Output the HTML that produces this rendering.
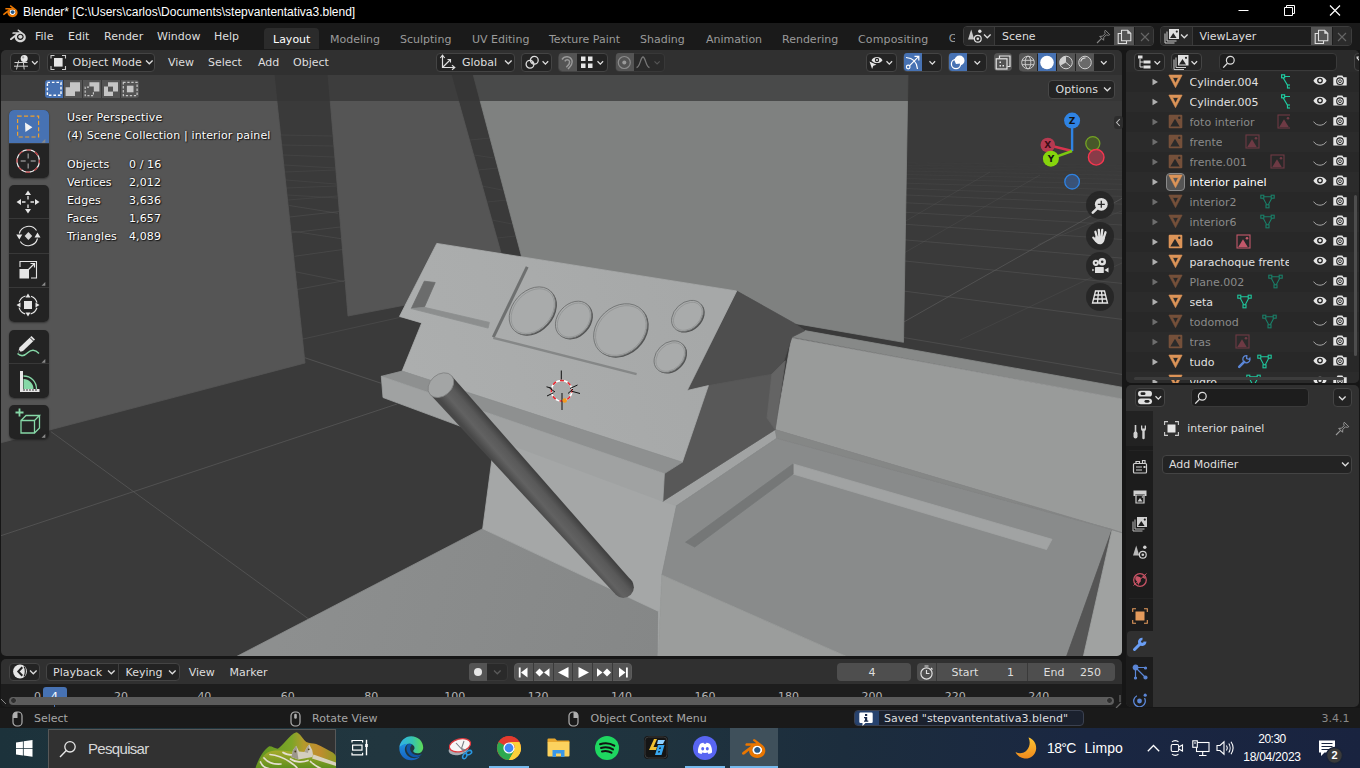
<!DOCTYPE html>
<html><head><meta charset="utf-8"><title>Blender</title>
<style>
*{box-sizing:border-box;margin:0;padding:0}
html,body{width:1360px;height:768px;overflow:hidden;background:#161616}
body{position:relative;font-family:"DejaVu Sans","Liberation Sans",sans-serif;font-size:11px;color:#dedede;line-height:1}
.a{position:absolute}
.t{position:absolute;white-space:pre;line-height:13px;height:13px}
.seg{font-family:"Liberation Sans",sans-serif}
svg{position:absolute;overflow:visible}
#title{left:0;top:0;width:1360px;height:23px;background:#000}
#topbar{left:0;top:23px;width:1360px;height:26.5px;background:#1a1a1a}
#vhead{left:0;top:49px;width:1123px;height:25px;background:#2b2b2b;border-radius:0 5px 0 0}
.btn{position:absolute;background:#232323;border:1px solid #444;border-radius:4px}
.tab{color:#9b9b9b}
</style></head><body>
<!--TITLE-->
<div id="title" class="a">
<span class="t seg" style="left:23px;top:5px;font-size:12px;line-height:15px;height:15px;color:#fff">Blender* [C:\Users\carlos\Documents\stepvantentativa3.blend]</span>
</div>
<!--TOPBAR-->
<div id="topbar" class="a">
<span class="t" style="left:35px;top:7px">File</span>
<span class="t" style="left:68px;top:7px">Edit</span>
<span class="t" style="left:104px;top:7px">Render</span>
<span class="t" style="left:157px;top:7px">Window</span>
<span class="t" style="left:214px;top:7px">Help</span>
<div class="a" style="left:264px;top:5px;width:55px;height:21px;background:#2b2b2b;border-radius:4px 4px 0 0"></div>
<span class="t" style="left:273px;top:10px;color:#fff">Layout</span>
<span class="t tab" style="left:330px;top:10px">Modeling</span>
<span class="t tab" style="left:400px;top:10px">Sculpting</span>
<span class="t tab" style="left:472px;top:10px">UV Editing</span>
<span class="t tab" style="left:549px;top:10px">Texture Paint</span>
<span class="t tab" style="left:640px;top:10px">Shading</span>
<span class="t tab" style="left:706px;top:10px">Animation</span>
<span class="t tab" style="left:782px;top:10px">Rendering</span>
<span class="t tab" style="left:858px;top:10px;letter-spacing:.14px">Compositing</span>
</div>
<!--VHEADBG-->
<!--VIEWPORT-->
<svg class="a" style="left:0;top:0" width="1360" height="768" viewBox="0 0 1360 768">
<defs>
<clipPath id="vpc"><path d="M1 74H1122V651a5 5 0 0 1 -5 5H6a5 5 0 0 1 -5 -5Z"/></clipPath>
<linearGradient id="cyl" gradientUnits="userSpaceOnUse" x1="541" y1="478.7" x2="523" y2="494.5"><stop offset="0" stop-color="#414141"/><stop offset=".3" stop-color="#595959"/><stop offset=".65" stop-color="#626262"/><stop offset="1" stop-color="#484848"/></linearGradient>
<linearGradient id="dash" gradientUnits="userSpaceOnUse" x1="700" y1="300" x2="420" y2="400"><stop offset="0" stop-color="#a6a8a8"/><stop offset="1" stop-color="#acaeae"/></linearGradient>
<linearGradient id="floor" gradientUnits="userSpaceOnUse" x1="300" y1="560" x2="660" y2="660"><stop offset="0" stop-color="#8d8f8f"/><stop offset="1" stop-color="#858787"/></linearGradient>
</defs>
<g clip-path="url(#vpc)">
<rect x="0" y="74" width="1123" height="584" fill="#3a3a3a"/>
<!--grid-->
<g stroke="#5a5a5a" stroke-width="1" fill="none" id="grid">
<g stroke-opacity=".75"><path d="M50.8 431.5L310 620M0 536L397 404M305 357.8L381 383.2"/>
<path d="M904 321.900L1124 197.200"/></g>
<path d="M904 337.6L1124 374.8" stroke-opacity="0.55"/>
<path d="M904 291.1L1124 319.6" stroke-opacity="0.52"/>
<path d="M904 260.9L1124 283.6" stroke-opacity="0.48"/>
<path d="M904 239.8L1124 258.3" stroke-opacity="0.45"/>
<path d="M904 224.2L1124 239.6" stroke-opacity="0.41"/>
<path d="M904 212.2L1124 225.1" stroke-opacity="0.38"/>
<path d="M904 202.7L1124 213.6" stroke-opacity="0.34"/>
<path d="M904 194.9L1124 204.2" stroke-opacity="0.31"/>
<path d="M904 188.5L1124 196.5" stroke-opacity="0.27"/>
<path d="M904 183.1L1124 189.9" stroke-opacity="0.23"/>
<path d="M904 178.5L1124 184.3" stroke-opacity="0.20"/>
<path d="M904 174.5L1124 179.5" stroke-opacity="0.17"/>
<path d="M904 171.0L1124 175.3" stroke-opacity="0.13"/>
<path d="M904 168.0L1124 171.5" stroke-opacity="0.09"/>
<path d="M904 165.3L1124 168.2" stroke-opacity="0.08"/>
<path d="M904 162.8L1124 165.3" stroke-opacity="0.08"/>
<g stroke-opacity=".3"><path d="M904 253L1040 175M904 222L990 172M1038 244.500L1124 210M960 340L1124 262"/></g>
<g stroke-opacity=".4">
<path d="M291.3 232.8L340 227M291.5 231L341 238.7M294.4 256.3L342 249.6M296 271.9L344 281.6M297 289.5L345 280.5M289.3 205.5L338 213.3M289.500 217L339 211.500M303 339L402.600 316.800"/></g>
<g stroke-opacity=".25">
<path d="M286 180L336 184M286.500 188L336.500 186M287.500 195L337 198M288 200L337.500 196M284 165L335 168M284.500 172L335.500 170M283 155L334 157M282 145L333 146M281 135L332 136"/>
<path d="M470 140L490 138M474 155L494 158M478 170L498 168M482 186L502 190M487 202L507 200M492 220L512 224M497 238L516 236"/></g>
</g>
<!--walls-->
<polygon points="0,74 274,74 305,363 0,443" fill="#555" stroke="#555" stroke-width=".8" stroke-linejoin="round"/>
<polygon points="328,74 451,74 510,285 348,316" fill="#555" stroke="#555" stroke-width=".8" stroke-linejoin="round"/>
<polygon points="473,74 908,74 903.5,342.3 794.5,323.4 736.7,291 521.7,257" fill="#7f8180" stroke="#7f8180" stroke-width=".8" stroke-linejoin="round"/>
<!--seat back-->
<polygon points="804.9,330.6 1123,387.4 1123,399.2 791.9,337.1" fill="#878988" stroke="#878988" stroke-width=".8" stroke-linejoin="round"/>
<polygon points="791.5,338 1123,399.2 1123,533 775.2,429.6" fill="#999b9a" stroke="#999b9a" stroke-width=".8" stroke-linejoin="round"/>
<!--floor/body-->
<polygon points="482.7,528.7 658.5,611.4 658.5,658 233.7,658" fill="url(#floor)" stroke="url(#floor)" stroke-width=".8" stroke-linejoin="round"/>
<polygon points="495,436 662.8,500 676.5,505.8 661.9,575 658.2,658 658.5,611.4 482.7,528.7" fill="#a5a7a7" stroke="#a5a7a7" stroke-width=".8" stroke-linejoin="round"/>
<!--seat-->
<polygon points="662.8,501.3 775.2,429.6 776.7,438.3 676.5,505.8" fill="#a1a3a3" stroke="#a1a3a3" stroke-width=".8" stroke-linejoin="round"/>
<polygon points="776.7,438.3 1112.1,529.5 1066,658 850,658 661.9,575 676.5,505.8" fill="#898b8b" stroke="#898b8b" stroke-width=".8" stroke-linejoin="round"/>
<polygon points="661.9,575 850,658 658.2,658" fill="#9b9d9c" stroke="#9b9d9c" stroke-width=".8" stroke-linejoin="round"/>
<polygon points="1112.1,529.5 1083,658 1066,658" fill="#555" stroke="#555" stroke-width=".8" stroke-linejoin="round"/>
<polygon points="1112.1,529.5 1123,533 1123,658 1083,658" fill="#a0a2a1" stroke="#a0a2a1" stroke-width=".8" stroke-linejoin="round"/>
<polygon points="775.2,429.6 1123,533 1112.1,529.5 776.7,438.3" fill="#858786" stroke="#858786" stroke-width=".8" stroke-linejoin="round"/>
<polygon points="793.1,463.9 1052,539.3 1046.5,549.5 793.1,474" fill="#a1a3a3" stroke="#a1a3a3" stroke-width=".8" stroke-linejoin="round"/>
<polygon points="793.1,463.9 793.1,474 694.7,547 685.6,542.2" fill="#757777" stroke="#757777" stroke-width=".8" stroke-linejoin="round"/>
<!--dashboard sides-->
<polygon points="736.7,291 794.5,323.4 804.9,330.6 791.9,337.1 783.3,362.8 771.9,374.2 687.2,390.5" fill="#4e4e4e" stroke="#4e4e4e" stroke-width=".8" stroke-linejoin="round"/>
<polygon points="708.4,385.6 771.9,374.2 767,418 775.2,429.6 662.8,501.3 664.4,473.6 682.3,462.2" fill="#585858" stroke="#585858" stroke-width=".8" stroke-linejoin="round"/>
<polygon points="771.9,374.2 785.3,360.8 775.2,429.6 767,418" fill="#646464" stroke="#646464" stroke-width=".8" stroke-linejoin="round"/>
<!--dashboard top-->
<polygon points="436.8,243.4 736.7,291 687.2,390.5 708.4,385.6 682.3,462.2 402.1,371.1 421.7,322.9 399.5,316.4" fill="url(#dash)" stroke="url(#dash)" stroke-width=".8" stroke-linejoin="round"/>
<!--ledge-->
<polygon points="402.1,371.1 682.3,462.2 664.4,473.6 381.3,376.3" fill="#8e9090" stroke="#8e9090" stroke-width=".8" stroke-linejoin="round"/>
<polygon points="381.3,376.3 664.4,473.6 662.8,501.3 383,397.5" fill="#a0a2a2" stroke="#a0a2a2" stroke-width=".8" stroke-linejoin="round"/>
<!--dash details-->
<polygon points="424.3,281.2 435.2,282.5 424.3,307.3 411.3,308.6" fill="#6b6c6c" stroke="#6b6c6c" stroke-width=".8" stroke-linejoin="round"/>
<polygon points="411.3,308.6 424.3,307.3 489.4,322.4 488.1,328.1" fill="#8c8e8e" stroke="#8c8e8e" stroke-width=".8" stroke-linejoin="round"/>
<path d="M527.2 266.9L493.3 337.2" stroke="#6e7070" stroke-width="3" fill="none"/>
<path d="M493.3 337.8L636.6 374.2" stroke="#858787" stroke-width="2.4" fill="none"/>
<g id="gauges" fill="#a9abab" stroke="#6c6e6e" stroke-width=".8">
<ellipse cx="533.7" cy="311.8" rx="19.8" ry="26.8" transform="rotate(42 533.7 311.8)" fill="#525353" stroke="none"/>
<ellipse cx="532.4" cy="310.8" rx="19.8" ry="26.8" transform="rotate(42 532.4 310.8)"/>
<ellipse cx="532.7" cy="311.1" rx="18.2" ry="25.2" transform="rotate(42 532.7 311.1)" fill="none" stroke="#8b8d8d" stroke-width=".6"/>
<ellipse cx="574.8" cy="320.8" rx="15.8" ry="20.6" transform="rotate(42 574.8 320.8)" fill="#525353" stroke="none"/>
<ellipse cx="573.5" cy="319.8" rx="15.8" ry="20.6" transform="rotate(42 573.5 319.8)"/>
<ellipse cx="573.8" cy="320.1" rx="14.200000000000001" ry="19.0" transform="rotate(42 573.8 320.1)" fill="none" stroke="#8b8d8d" stroke-width=".6"/>
<ellipse cx="621.8" cy="331.2" rx="23.5" ry="29.5" transform="rotate(47 621.8 331.2)" fill="#525353" stroke="none"/>
<ellipse cx="620.5" cy="330.2" rx="23.5" ry="29.5" transform="rotate(47 620.5 330.2)"/>
<ellipse cx="620.8" cy="330.5" rx="21.9" ry="27.9" transform="rotate(47 620.8 330.5)" fill="none" stroke="#8b8d8d" stroke-width=".6"/>
<ellipse cx="688.8" cy="317.0" rx="13.4" ry="17.8" transform="rotate(47 688.8 317.0)" fill="#525353" stroke="none"/>
<ellipse cx="687.5" cy="316" rx="13.4" ry="17.8" transform="rotate(47 687.5 316)"/>
<ellipse cx="687.8" cy="316.3" rx="11.8" ry="16.2" transform="rotate(47 687.8 316.3)" fill="none" stroke="#8b8d8d" stroke-width=".6"/>
<ellipse cx="671.2" cy="357.7" rx="13.6" ry="17.8" transform="rotate(45 671.2 357.7)" fill="#525353" stroke="none"/>
<ellipse cx="669.9" cy="356.7" rx="13.6" ry="17.8" transform="rotate(45 669.9 356.7)"/>
<ellipse cx="670.2" cy="357.0" rx="12.0" ry="16.2" transform="rotate(45 670.2 357.0)" fill="none" stroke="#8b8d8d" stroke-width=".6"/>
</g>
<!--cylinder-->
<polygon points="451.6,375.8 632.7,582 614.3,593 430.2,394.6" fill="url(#cyl)"/>
<circle cx="623.3" cy="587.3" r="10.6" fill="url(#cyl)"/>
<ellipse cx="440.9" cy="385.2" rx="14.3" ry="10.7" fill="#a3a5a5" stroke="#7f8181" stroke-width=".8" transform="rotate(-41 440.9 385.2)"/>
<!--cursor-->
<g id="cursor">
<circle cx="561.6" cy="390.7" r="10.3" fill="none" stroke="#fff" stroke-width="1.5"/>
<circle cx="561.6" cy="390.7" r="10.3" fill="none" stroke="#e8252d" stroke-width="1.5" stroke-dasharray="4.04 4.05" stroke-dashoffset="2"/>
<path d="M561.3 370.500V379.500M562 393V410M546.500 386.800L552 388.300M571.500 391.200L580 393.500M547 396L553.500 392.800M570 388.500L577.500 385M549.500 388L555 392M573 389L568 393.500" stroke="#111" stroke-width="1"/>
<circle cx="564.7" cy="400.5" r="2.3" fill="#f39b1d"/>
</g>
</g>
</svg>
<!--/VIEWPORT-->
<!--VHEAD-->
<div id="vhead" class="a" style="left:1px;width:1121px;top:49.5px;height:25px;background:#303030;border-radius:5px 5px 0 0"></div>
<div class="a" id="vh" style="left:0;top:0;width:1123px;height:110px">
<!-- editor type -->
<div class="btn" style="left:10px;top:52.5px;width:30px;height:19px"></div>
<svg style="left:13px;top:54px" width="26" height="17" viewBox="0 0 26 17"><g stroke="#cfcfcf" stroke-width="1" fill="none"><path d="M1.500 8.500H14.500M1 12.200H15M5.700 6.500L3.500 15.500M10.200 6.500L11.200 15.500"/></g><circle cx="11.200" cy="4.500" r="3.500" fill="#e8e8e8"/><circle cx="10.200" cy="3.400" r="1.100" fill="#a0a0a0"/><path d="M19 7.300l2.800 2.800 2.800-2.800" stroke="#ddd" stroke-width="1.300" fill="none"/></svg>
<!-- object mode -->
<div class="btn" style="left:47px;top:52.5px;width:108px;height:19px"></div>
<svg style="left:50px;top:54px" width="17" height="17" viewBox="0 0 17 17"><rect x="4" y="4" width="8.6" height="8.6" fill="#e6e6e6"/><path d="M1 4.5V1.5H4.5M12 1.5H15.5V4.5M15.5 12V15.5H12M4.5 15.5H1V12" stroke="#ccc" stroke-width="1.1" fill="none"/></svg>
<span class="t" style="left:72.5px;top:56px">Object Mode</span>
<svg style="left:145px;top:59px" width="9" height="7" viewBox="0 0 9 7"><path d="M1 1.5l3.3 3.3 3.3-3.3" stroke="#ddd" stroke-width="1.3" fill="none"/></svg>
<span class="t" style="left:168px;top:56px">View</span>
<span class="t" style="left:208px;top:56px">Select</span>
<span class="t" style="left:258px;top:56px">Add</span>
<span class="t" style="left:293px;top:56px">Object</span>
<!-- global -->
<div class="btn" style="left:436px;top:52.5px;width:78.5px;height:19px"></div>
<svg style="left:439px;top:54px" width="17" height="17" viewBox="0 0 17 17"><path d="M3.5 1.5V13.5H15.5M3.5 13.5L11 6" stroke="#ddd" stroke-width="1.2" fill="none"/><path d="M1.3 4l2.2-2.8L5.7 4M13 11.3l2.8 2.2-2.8 2.2M8.5 5.5h3v3" stroke="#ddd" stroke-width="1.1" fill="none"/></svg>
<span class="t" style="left:462px;top:56px">Global</span>
<svg style="left:504px;top:59px" width="9" height="7" viewBox="0 0 9 7"><path d="M1 1.5l3.3 3.3 3.3-3.3" stroke="#ddd" stroke-width="1.3" fill="none"/></svg>
<!-- pivot -->
<div class="btn" style="left:521px;top:52.5px;width:31px;height:19px"></div>
<svg style="left:523px;top:54px" width="28" height="17" viewBox="0 0 28 17"><g stroke="#ddd" stroke-width="1.300" fill="none"><circle cx="7" cy="10.300" r="3.900"/><circle cx="11.300" cy="6.300" r="3.900"/><circle cx="9.200" cy="8.300" r="1" fill="#ddd" stroke="none"/><path d="M19.600 7.300l2.800 2.800 2.800-2.800"/></g></svg>
<!-- snap -->
<div class="btn" style="left:558px;top:52.5px;width:50px;height:19px"></div>
<div class="a" style="left:558.5px;top:53px;width:18px;height:18px;background:#545454;border-radius:3px 0 0 3px"></div>
<svg style="left:559px;top:54px" width="17" height="17" viewBox="0 0 17 17"><path d="M3 5.5C5.5 1.5 11.5 1.8 13 6.5C14 10 11 13 9 15M5.8 7.3C7 5 10 5.2 10.6 7.6C11 10 9 11.5 7.3 13.2" stroke="#9a9a9a" stroke-width="1.5" fill="none"/></svg>
<svg style="left:578px;top:54px" width="30" height="17" viewBox="0 0 30 17"><g fill="#e6e6e6"><rect x="3" y="2.5" width="4.5" height="4.5"/><rect x="10" y="2.5" width="4.5" height="4.5"/><rect x="3" y="9.5" width="4.5" height="4.5"/><rect x="10" y="9.5" width="4.5" height="4.5"/></g><path d="M19.5 7.3l2.8 2.8 2.8-2.8" stroke="#ddd" stroke-width="1.3" fill="none"/></svg>
<!-- proportional -->
<div class="btn" style="left:615px;top:52.5px;width:50px;height:19px;background:#2a2a2a;border-color:#383838"></div>
<div class="a" style="left:615.5px;top:53px;width:18px;height:18px;background:#545454;border-radius:3px 0 0 3px"></div>
<svg style="left:616px;top:54px" width="17" height="17" viewBox="0 0 17 17"><circle cx="8.3" cy="8.5" r="6" stroke="#8c8c8c" stroke-width="1.2" fill="none"/><circle cx="8.3" cy="8.5" r="2" fill="#9a9a9a"/></svg>
<svg style="left:634px;top:54px" width="30" height="17" viewBox="0 0 30 17"><path d="M2.5 13.5C6 13.5 6.5 3 9 3S12 13.5 15.5 13.5" stroke="#777" stroke-width="1.3" fill="none"/><path d="M20.5 7.3l2.6 2.6 2.6-2.6" stroke="#555" stroke-width="1.2" fill="none"/></svg>
<!-- visibility -->
<div class="btn" style="left:866px;top:52.5px;width:30.5px;height:19px"></div>
<svg style="left:867px;top:54px" width="29" height="17" viewBox="0 0 29 17"><path d="M4.5 6.2C7 2 13 2 15.5 6.2C13 10 7 10 4.5 6.2Z" fill="#e6e6e6"/><circle cx="10" cy="6" r="2.2" fill="#232323"/><circle cx="10" cy="6" r="1" fill="#e6e6e6"/><path d="M2.5 7.5l7 3.2-3.2 1-1.2 3.3z" fill="#e6e6e6"/><path d="M19.5 7.3l2.8 2.8 2.8-2.8" stroke="#ddd" stroke-width="1.3" fill="none"/></svg>
<!-- gizmo -->
<div class="btn" style="left:903px;top:52.5px;width:38.5px;height:19px"></div>
<div class="a" style="left:903.5px;top:53px;width:18px;height:18px;background:#4772b3;border-radius:3px 0 0 3px"></div>
<svg style="left:904px;top:54px" width="37" height="17" viewBox="0 0 37 17"><g stroke="#fff" stroke-width="1.2" fill="none"><circle cx="4.2" cy="13" r="1.8"/><path d="M5.6 11.6L14.5 2.6M10.5 2.3h4.3v4.3M2 3.5C9 4 13 8 13.5 15"/><path d="M25.5 7.3l2.8 2.8 2.8-2.8" stroke="#ddd" stroke-width="1.3"/></g></svg>
<!-- overlay -->
<div class="btn" style="left:948px;top:52.5px;width:38.5px;height:19px"></div>
<div class="a" style="left:948.5px;top:53px;width:18px;height:18px;background:#4772b3;border-radius:3px 0 0 3px"></div>
<svg style="left:949px;top:54px" width="37" height="17" viewBox="0 0 37 17"><circle cx="10.5" cy="6.5" r="5" fill="#fff"/><circle cx="7" cy="10" r="4.6" fill="#4772b3" stroke="#fff" stroke-width="1.2"/><path d="M5 5.6A5 5 0 0 1 11.8 9.5L7 10Z" fill="#fff"/><path d="M25.5 7.3l2.8 2.8 2.8-2.8" stroke="#ddd" stroke-width="1.3" fill="none"/></svg>
<!-- xray -->
<div class="a" style="left:994.3px;top:53px;width:17.7px;height:18px;background:#545454;border-radius:4px"></div>
<svg style="left:994.3px;top:53.7px" width="18" height="17" viewBox="0 0 18 17"><g stroke="#e6e6e6" stroke-width="1.2" fill="none"><path d="M5.5 4.5V2H16V12.5H13.5"/><rect x="2.2" y="4.8" width="10.8" height="10.2"/></g><rect x="5.5" y="7.5" width="1.5" height="1.5" fill="#e6e6e6"/><rect x="5.5" y="11" width="1.5" height="1.5" fill="#e6e6e6"/><rect x="8.5" y="11" width="1.5" height="1.5" fill="#e6e6e6"/></svg>
<!-- shading -->
<div class="btn" style="left:1018.5px;top:52.5px;width:96px;height:19px"></div>
<div class="a" style="left:1019px;top:53px;width:18px;height:18px;background:#545454;border-radius:3px 0 0 3px"></div>
<div class="a" style="left:1037.7px;top:53px;width:18.3px;height:18px;background:#4772b3"></div>
<div class="a" style="left:1056.7px;top:53px;width:18.3px;height:18px;background:#545454"></div>
<div class="a" style="left:1075.7px;top:53px;width:18.3px;height:18px;background:#545454"></div>
<svg style="left:1019px;top:54px" width="95" height="17" viewBox="0 0 95 17"><g stroke="#c8c8c8" stroke-width="1" fill="none"><circle cx="9" cy="8.5" r="6.3"/><ellipse cx="9" cy="8.5" rx="2.8" ry="6.3"/><path d="M3 6.3H15M3 10.7H15"/></g><circle cx="28" cy="8.5" r="6.8" fill="#fff"/><circle cx="47" cy="8.5" r="6.300" fill="#5e5e5e" stroke="#d0d0d0" stroke-width="1"/><path d="M47 8.500V2.200A6.300 6.300 0 0 0 41.500 11.600Z" fill="#cfcfcf"/><path d="M47 8.500L51.800 12.600" stroke="#d0d0d0" stroke-width="1"/><circle cx="66" cy="8.5" r="6.3" fill="#6a6a6a" stroke="#d0d0d0" stroke-width="1"/><path d="M61.8 7.5A4.5 4.5 0 0 1 66.5 4" stroke="#e6e6e6" stroke-width="1.1" fill="none"/><path d="M82 7.3l2.8 2.8 2.8-2.8" stroke="#ddd" stroke-width="1.3" fill="none"/></svg>
<!-- tool settings bar -->
<div class="a" style="left:1px;top:74.5px;width:1121px;height:26.5px;background:rgba(53,53,53,.72)"></div>
<div class="a" style="left:45px;top:80px;width:94px;height:17.5px;background:#3a3a3a;border-radius:3px"></div>
<div class="a" style="left:45px;top:80px;width:18px;height:17.5px;background:#4772b3;border-radius:3px 0 0 3px"></div>
<div class="a" style="left:63.8px;top:80px;width:18.2px;height:17.5px;background:#545454"></div>
<div class="a" style="left:82.7px;top:80px;width:18.2px;height:17.5px;background:#545454"></div>
<div class="a" style="left:101.6px;top:80px;width:18.2px;height:17.5px;background:#545454"></div>
<div class="a" style="left:120.5px;top:80px;width:18.3px;height:17.5px;background:#545454;border-radius:0 3px 3px 0"></div>
<svg style="left:45px;top:80px" width="94" height="18" viewBox="0 0 94 18"><rect x="2.400" y="2.400" width="13.600" height="12.900" fill="none" stroke="#fff" stroke-width="1.400" stroke-dasharray="2.600 1.900"/><path d="M25 2.200H35V11.600H30V16H20.600V7.200H25Z" fill="#c6c6c6"/><path d="M44.400 2.200H54.400V11.600H48.800V6.600H44.400Z" fill="#c6c6c6"/><path d="M44 7.200H40.200V15.600H48.400V12" fill="none" stroke="#c6c6c6" stroke-width="1.200" stroke-dasharray="2.100 1.500"/><path d="M63 2.200H73V11.600H68V16H59V6.600H63Z" fill="#c6c6c6"/><rect x="63" y="6.600" width="5" height="5" fill="#545454"/><rect x="78.300" y="2.400" width="13.800" height="13.200" fill="none" stroke="#c6c6c6" stroke-width="1.200" stroke-dasharray="2.300 1.700"/><rect x="81.900" y="5.700" width="6.600" height="6.600" fill="#c6c6c6"/></svg>
<!-- options -->
<div class="btn" style="left:1047.5px;top:80px;width:67.5px;height:18.5px;background:#232323;border-color:#474747"></div>
<span class="t" style="left:1055.5px;top:82.500px">Options</span>
<svg style="left:1103px;top:85.500px" width="9" height="7" viewBox="0 0 9 7"><path d="M1 1.5l3.3 3.3 3.3-3.3" stroke="#ddd" stroke-width="1.3" fill="none"/></svg>
</div>
<!--/VHEAD-->
<!--OVERLAY-->
<div class="a" id="ov" style="left:0;top:0;width:1123px;height:660px">
<div class="a" style="left:9px;top:109.5px;width:40px;height:68.8px;background:rgba(33,33,33,.95);border-radius:5px;box-shadow:0 1px 2px rgba(0,0,0,.4)"></div>
<div class="a" style="left:9px;top:109.5px;width:40px;height:34.4px;background:#4772b3;border-radius:5px 5px 0 0"></div>
<svg style="left:8.700px;top:109.5px" width="40" height="34.400" viewBox="0 0 40 34.400"><rect x="8.600" y="6.200" width="21" height="20.800" fill="none" stroke="#f0a02c" stroke-width="1.200" stroke-dasharray="4.100 2.300"/><path d="M16 12.400L23.400 17.200L16.400 21.900Z" fill="#f2f2f2"/><path d="M36.300 29V32.800H32.500Z" fill="#8a8a8a"/></svg>
<div class="a" style="left:9px;top:143.4px;width:40px;height:1px;background:#383838"></div>
<svg style="left:8.700px;top:143.9px" width="40" height="34.400" viewBox="0 0 40 34.400"><circle cx="19.200" cy="17" r="11.200" fill="none" stroke="#eee" stroke-width="1.200"/><circle cx="19.200" cy="17" r="11.200" fill="none" stroke="#b8383c" stroke-width="1.200" stroke-dasharray="4.400 4.400" stroke-dashoffset="2"/><path d="M19.200 9.500V14.500M19.200 19.500V24.500M11.700 17H16.700M21.700 17H26.700" stroke="#8a8a8a" stroke-width="1.400"/></svg>
<div class="a" style="left:9px;top:184.5px;width:40px;height:137.6px;background:rgba(33,33,33,.95);border-radius:5px;box-shadow:0 1px 2px rgba(0,0,0,.4)"></div>
<svg style="left:8.700px;top:184.5px" width="40" height="34.400" viewBox="0 0 40 34.400"><g fill="#e6e6e6"><path d="M19 5.500L22 10H16ZM19 28.500L22 24H16ZM7.500 17L12 14V20ZM30.500 17L26 14V20Z"/></g><path d="M19 11V14.500M19 19.500V23M13 17H16.500M21.500 17H25" stroke="#e6e6e6" stroke-width="1.300"/></svg>
<div class="a" style="left:9px;top:218.4px;width:40px;height:1px;background:#383838"></div>
<svg style="left:8.700px;top:218.9px" width="40" height="34.400" viewBox="0 0 40 34.400"><path d="M10.300 14.500A9.600 9.600 0 0 1 27.500 11.500M28.500 19.500A9.600 9.600 0 0 1 11.300 22.500" fill="none" stroke="#e6e6e6" stroke-width="1.100"/><path d="M19.400 13L23.200 17L19.400 21L15.600 17Z" fill="#d8d8d8"/><path d="M7.300 15.500H13.300L10.300 20.500ZM25.500 18.500H31.500L28.500 13.500Z" fill="#e6e6e6"/></svg>
<div class="a" style="left:9px;top:252.8px;width:40px;height:1px;background:#383838"></div>
<svg style="left:8.700px;top:253.3px" width="40" height="34.400" viewBox="0 0 40 34.400"><rect x="10.500" y="16" width="9.500" height="9.500" fill="#e6e6e6"/><path d="M11 14V8.500H27.500V25H22" fill="none" stroke="#e6e6e6" stroke-width="1.100"/><path d="M19.500 16.500L25 11M21.500 10.500H25.500V14.500" stroke="#e6e6e6" stroke-width="1.200" fill="none"/><path d="M36.300 29V32.800H32.500Z" fill="#8a8a8a"/></svg>
<div class="a" style="left:9px;top:287.2px;width:40px;height:1px;background:#383838"></div>
<svg style="left:8.700px;top:287.7px" width="40" height="34.400" viewBox="0 0 40 34.400"><rect x="15" y="13" width="8" height="8" fill="#e6e6e6"/><circle cx="19" cy="17" r="9.300" fill="none" stroke="#e6e6e6" stroke-width="1.200" stroke-dasharray="9 5.600" stroke-dashoffset="-2.800"/><path d="M19 5.500L21.500 9.500H16.500ZM19 28.500L21.500 24.500H16.500ZM7.500 17L11.500 14.500V19.500ZM30.500 17L26.500 14.500V19.500Z" fill="#e6e6e6"/></svg>
<div class="a" style="left:9px;top:329.5px;width:40px;height:68.8px;background:rgba(33,33,33,.95);border-radius:5px;box-shadow:0 1px 2px rgba(0,0,0,.4)"></div>
<svg style="left:8.700px;top:329.5px" width="40" height="34.400" viewBox="0 0 40 34.400"><path d="M8.500 23.500C12 27 16 25.500 19 22.500C22 19.500 26 19 30 23.500" fill="none" stroke="#86d8a7" stroke-width="1.400"/><path d="M9 22.500L10.500 17.500L22.500 6L26 9.500L14 21Z" fill="#e6e6e6"/><path d="M21 7.500L24.500 11" stroke="#222" stroke-width="1"/><path d="M9 22.500L9.800 19.800L11.700 21.700Z" fill="#222"/><path d="M36.300 29V32.800H32.500Z" fill="#8a8a8a"/></svg>
<div class="a" style="left:9px;top:363.4px;width:40px;height:1px;background:#383838"></div>
<svg style="left:8.700px;top:363.9px" width="40" height="34.400" viewBox="0 0 40 34.400"><path d="M12.500 7V26.500M11 26.500H30.500" stroke="#e6e6e6" stroke-width="3"/><path d="M14 10H16M14 13H16M14 16H16M14 19H16M14 22H16M15 27V25M18 27V25M21 27V25M24 27V25M27 27V25" stroke="#222" stroke-width=".9"/><path d="M14.500 25V15C20 15 24.500 19.500 24.500 25Z" fill="#86d8a7"/><path d="M14.500 12C22 12 27.500 17.500 27.500 25" fill="none" stroke="#86d8a7" stroke-width="1.300"/></svg>
<div class="a" style="left:9px;top:404.5px;width:40px;height:34.4px;background:rgba(33,33,33,.95);border-radius:5px;box-shadow:0 1px 2px rgba(0,0,0,.4)"></div>
<svg style="left:8.700px;top:404.5px" width="40" height="34.400" viewBox="0 0 40 34.400"><g fill="none" stroke="#86d8a7" stroke-width="1.300"><path d="M12 15.500H25.500V28H12ZM12 15.500L17 10.500H30.500L25.500 15.500M30.500 10.500V23L25.500 28"/><path d="M6.500 7.500H14.500M10.500 3.500V11.500" stroke-width="1.800"/></g><path d="M36.300 29V32.800H32.500Z" fill="#8a8a8a"/></svg>
<span class="t" style="left:67px;top:110.5px;color:#fff;text-shadow:0 0 2px rgba(0,0,0,.9),1px 1px 1px rgba(0,0,0,.7);letter-spacing:0.2px">User Perspective</span>
<span class="t" style="left:67px;top:128.5px;color:#fff;text-shadow:0 0 2px rgba(0,0,0,.9),1px 1px 1px rgba(0,0,0,.7);letter-spacing:0.14px">(4) Scene Collection | interior painel</span>
<span class="t" style="left:67px;top:157.7px;color:#fff;text-shadow:0 0 2px rgba(0,0,0,.9),1px 1px 1px rgba(0,0,0,.7);letter-spacing:0.1px">Objects</span>
<span class="t" style="left:129px;top:157.7px;color:#fff;text-shadow:0 0 2px rgba(0,0,0,.9),1px 1px 1px rgba(0,0,0,.7);letter-spacing:0.1px">0 / 16</span>
<span class="t" style="left:67px;top:175.7px;color:#fff;text-shadow:0 0 2px rgba(0,0,0,.9),1px 1px 1px rgba(0,0,0,.7);letter-spacing:0.1px">Vertices</span>
<span class="t" style="left:129px;top:175.7px;color:#fff;text-shadow:0 0 2px rgba(0,0,0,.9),1px 1px 1px rgba(0,0,0,.7);letter-spacing:0.1px">2,012</span>
<span class="t" style="left:67px;top:193.7px;color:#fff;text-shadow:0 0 2px rgba(0,0,0,.9),1px 1px 1px rgba(0,0,0,.7);letter-spacing:0.1px">Edges</span>
<span class="t" style="left:129px;top:193.7px;color:#fff;text-shadow:0 0 2px rgba(0,0,0,.9),1px 1px 1px rgba(0,0,0,.7);letter-spacing:0.1px">3,636</span>
<span class="t" style="left:67px;top:211.7px;color:#fff;text-shadow:0 0 2px rgba(0,0,0,.9),1px 1px 1px rgba(0,0,0,.7);letter-spacing:0.1px">Faces</span>
<span class="t" style="left:129px;top:211.7px;color:#fff;text-shadow:0 0 2px rgba(0,0,0,.9),1px 1px 1px rgba(0,0,0,.7);letter-spacing:0.1px">1,657</span>
<span class="t" style="left:67px;top:229.7px;color:#fff;text-shadow:0 0 2px rgba(0,0,0,.9),1px 1px 1px rgba(0,0,0,.7);letter-spacing:0.1px">Triangles</span>
<span class="t" style="left:129px;top:229.7px;color:#fff;text-shadow:0 0 2px rgba(0,0,0,.9),1px 1px 1px rgba(0,0,0,.7);letter-spacing:0.1px">4,089</span>
<svg style="left:1030px;top:105px" width="90" height="90" viewBox="1030 105 90 90"><circle cx="1092.800" cy="143.600" r="7" fill="#4a5e27" fill-opacity=".85" stroke="#74a324" stroke-width="1.300"/><circle cx="1072.100" cy="181.700" r="7.300" fill="#3a5580" fill-opacity=".9" stroke="#2f83e3" stroke-width="1.300"/><path d="M1072.100 151L1047.800 145" stroke="#d8344e" stroke-width="2.400"/><circle cx="1047.800" cy="145" r="7.300" fill="#b53a50"/><path d="M1072.100 151V121" stroke="#2f83e3" stroke-width="2.400"/><path d="M1072.100 151L1051 158.700" stroke="#7cc811" stroke-width="2.400"/><circle cx="1096.200" cy="157.300" r="7.800" fill="#8d3b49" fill-opacity=".95" stroke="#f7364f" stroke-width="1.400"/><circle cx="1072.100" cy="120.600" r="8" fill="#2f83e3"/><circle cx="1050.900" cy="158.700" r="8" fill="#86d40c"/><g font-family="DejaVu Sans,sans-serif" font-size="9" font-weight="bold" text-anchor="middle" fill="#111"><text x="1072.100" y="123.900">Z</text><text x="1050.900" y="162">Y</text><text x="1047.800" y="148.300" fill="#3a0d16">X</text></g></svg>
<svg style="left:1086.200px;top:191.4px" width="28" height="28" viewBox="0 0 28 28"><circle cx="14" cy="14" r="14" fill="#262626" fill-opacity=".92"/><path d="M11.200 17.300L6.800 21.700" stroke="#e0e0e0" stroke-width="2.600" stroke-linecap="round"/><circle cx="15.300" cy="13.300" r="6.400" fill="#e0e0e0"/><path d="M11.800 13.300H18.800M15.300 9.800V16.800" stroke="#2a2a2a" stroke-width="1.300"/></svg>
<svg style="left:1086.200px;top:221.8px" width="28" height="28" viewBox="0 0 28 28"><circle cx="14" cy="14" r="14" fill="#262626" fill-opacity=".92"/><g stroke="#e0e0e0" stroke-width="2.300" stroke-linecap="round" fill="none"><path d="M11.300 16.500L9.400 9.800M13.400 15.500L12.800 7.800M15.500 15.500L16.200 8M17.500 16.500L19.500 10.300M10.300 19.300L7.300 15.600"/></g><path d="M9.300 14.500H18.700C19.300 19 17 22.300 13.800 22.300C11 22.300 9.300 20 9 17.500Z" fill="#e0e0e0"/></svg>
<svg style="left:1086.200px;top:252.2px" width="28" height="28" viewBox="0 0 28 28"><circle cx="14" cy="14" r="14" fill="#262626" fill-opacity=".92"/><g fill="#e0e0e0"><circle cx="9.800" cy="10.800" r="3.100"/><circle cx="16.200" cy="9.800" r="3.800"/><rect x="9" y="15" width="8.800" height="6" rx=".6"/><path d="M18.300 18L22.500 15.600V20.400Z"/><path d="M8.500 18L6.300 16.700V19.300Z"/></g><circle cx="9.800" cy="10.800" r="1.100" fill="#2a2a2a"/><circle cx="16.200" cy="9.800" r="1.300" fill="#2a2a2a"/></svg>
<svg style="left:1086.200px;top:282.6px" width="28" height="28" viewBox="0 0 28 28"><circle cx="14" cy="14" r="14" fill="#262626" fill-opacity=".92"/><g fill="none" stroke="#e6e6e6" stroke-width="1.300"><path d="M9.500 8H18.500L21.500 20H6.500Z"/><path d="M12.500 8L11.500 20M15.500 8L16.500 20M8.500 12H19.500M7.500 16H20.500"/></g></svg>
</div>
<!--/OVERLAY-->
<!--OUTLINER-->
<div class="a" id="outl" style="left:1125.5px;top:49.5px;width:233px;height:333px;background:#282828;border-radius:5px;overflow:hidden">
<svg style="left:26.5px;top:28.0px" width="7" height="8" viewBox="0 0 7 8"><path d="M0.5 0.8L6 4L0.5 7.2Z" fill="#b0b0b0"/></svg>
<svg style="left:42.0px;top:24.5px" width="15" height="15" viewBox="0 0 15 15"><path d="M0.900 1.100H14.100L7.500 13.600ZM4.500 3.500H10.500L7.500 9.200Z" fill="#dc9458" fill-rule="evenodd" stroke="#dc9458" stroke-width=".7" stroke-linejoin="round"/></svg>
<span class="t" style="left:64.0px;top:26.4px;color:#e0e0e0;max-width:99.5px;overflow:hidden">Cylinder.004</span>
<svg style="left:155.0px;top:24.5px;overflow:hidden" width="9.5" height="15" viewBox="0 0 9.5 15"><g fill="none" stroke="#1fc89e" stroke-width="1.2"><path d="M1.8 3.2L5.5 9.5L7.2 12.5M2.5 2.5H9"/><rect x="0.6" y="0.8" width="3" height="3" fill="#282828"/><rect x="6.5" y="11" width="3" height="3" fill="#282828"/></g></svg>
<svg style="left:187.5px;top:26.5px" width="14" height="10" viewBox="0 0 14 10"><path d="M0.4 4.7C3 -0.6 11 -0.6 13.600 4.7C11 10 3 10 0.4 4.700Z" fill="#e6e6e6"/><circle cx="7" cy="4.6" r="2.9" fill="#282828"/><circle cx="7" cy="4.600" r="1.500" fill="#e6e6e6"/></svg>
<svg style="left:207.3px;top:25.4px" width="14" height="11" viewBox="0 0 14 11"><path d="M0.3 2.3H3.600L4.600 0.500H9.400L10.400 2.300H13.700V10.600H0.300Z" fill="#e6e6e6"/><circle cx="7" cy="6.200" r="3.300" fill="none" stroke="#282828" stroke-width="1.100"/><circle cx="7" cy="6.200" r="1.400" fill="none" stroke="#282828" stroke-width="0.900"/></svg>
<div class="a" style="left:0;top:42.0px;width:235px;height:20px;background:#2b2b2b"></div>
<svg style="left:26.5px;top:48.0px" width="7" height="8" viewBox="0 0 7 8"><path d="M0.5 0.8L6 4L0.5 7.2Z" fill="#b0b0b0"/></svg>
<svg style="left:42.0px;top:44.5px" width="15" height="15" viewBox="0 0 15 15"><path d="M0.900 1.100H14.100L7.500 13.600ZM4.500 3.500H10.500L7.500 9.200Z" fill="#dc9458" fill-rule="evenodd" stroke="#dc9458" stroke-width=".7" stroke-linejoin="round"/></svg>
<span class="t" style="left:64.0px;top:46.4px;color:#e0e0e0;max-width:99.5px;overflow:hidden">Cylinder.005</span>
<svg style="left:155.0px;top:44.5px;overflow:hidden" width="9.5" height="15" viewBox="0 0 9.5 15"><g fill="none" stroke="#1fc89e" stroke-width="1.2"><path d="M1.8 3.2L5.5 9.5L7.2 12.5M2.5 2.5H9"/><rect x="0.6" y="0.8" width="3" height="3" fill="#282828"/><rect x="6.5" y="11" width="3" height="3" fill="#282828"/></g></svg>
<svg style="left:187.5px;top:46.5px" width="14" height="10" viewBox="0 0 14 10"><path d="M0.4 4.7C3 -0.6 11 -0.6 13.600 4.7C11 10 3 10 0.4 4.700Z" fill="#e6e6e6"/><circle cx="7" cy="4.6" r="2.9" fill="#282828"/><circle cx="7" cy="4.600" r="1.500" fill="#e6e6e6"/></svg>
<svg style="left:207.3px;top:45.4px" width="14" height="11" viewBox="0 0 14 11"><path d="M0.3 2.3H3.600L4.600 0.500H9.400L10.400 2.300H13.700V10.600H0.300Z" fill="#e6e6e6"/><circle cx="7" cy="6.200" r="3.300" fill="none" stroke="#282828" stroke-width="1.100"/><circle cx="7" cy="6.200" r="1.400" fill="none" stroke="#282828" stroke-width="0.900"/></svg>
<svg style="left:26.5px;top:68.0px" width="7" height="8" viewBox="0 0 7 8"><path d="M0.5 0.8L6 4L0.5 7.2Z" fill="#6e6e6e"/></svg>
<svg style="left:42.0px;top:64.5px" width="15" height="15" viewBox="0 0 15 15"><rect x="0.7" y="0.7" width="13.6" height="13.6" rx="1" fill="#75503a"/><path d="M2.3 12.6L7 4.8L11.7 12.6Z" fill="#282828"/><circle cx="11.3" cy="3.8" r="1.2" fill="#282828"/></svg>
<span class="t" style="left:64.0px;top:66.4px;color:#8a8a8a;max-width:99.5px;overflow:hidden">foto interior</span>
<svg style="left:151.0px;top:64.5px;overflow:hidden" width="13.5" height="15" viewBox="0 0 13.5 15"><rect x="1" y="1" width="13" height="13" fill="none" stroke="#6e3a44" stroke-width="1.1"/><path d="M2.3 13L7 5.2L11.7 13Z" fill="#6e3a44"/><circle cx="11" cy="4.3" r="1.3" fill="#6e3a44"/></svg>
<svg style="left:187.5px;top:71.0px" width="14" height="6" viewBox="0 0 14 6"><path d="M0.6 0.6C3.5 5.4 10.5 5.4 13.4 0.6" fill="none" stroke="#a8a8a8" stroke-width="1"/></svg>
<svg style="left:207.3px;top:65.4px" width="14" height="11" viewBox="0 0 14 11"><path d="M0.3 2.3H3.600L4.600 0.500H9.400L10.400 2.300H13.700V10.600H0.300Z" fill="#e6e6e6"/><circle cx="7" cy="6.200" r="3.300" fill="none" stroke="#282828" stroke-width="1.100"/><circle cx="7" cy="6.200" r="1.400" fill="none" stroke="#282828" stroke-width="0.900"/></svg>
<div class="a" style="left:0;top:82.0px;width:235px;height:20px;background:#2b2b2b"></div>
<svg style="left:26.5px;top:88.0px" width="7" height="8" viewBox="0 0 7 8"><path d="M0.5 0.8L6 4L0.5 7.2Z" fill="#6e6e6e"/></svg>
<svg style="left:42.0px;top:84.5px" width="15" height="15" viewBox="0 0 15 15"><rect x="0.7" y="0.7" width="13.6" height="13.6" rx="1" fill="#75503a"/><path d="M2.3 12.6L7 4.8L11.7 12.6Z" fill="#2b2b2b"/><circle cx="11.3" cy="3.8" r="1.2" fill="#2b2b2b"/></svg>
<span class="t" style="left:64.0px;top:86.4px;color:#8a8a8a;max-width:99.5px;overflow:hidden">frente</span>
<svg style="left:119.0px;top:84.5px;overflow:hidden" width="15" height="15" viewBox="0 0 15 15"><rect x="1" y="1" width="13" height="13" fill="none" stroke="#6e3a44" stroke-width="1.1"/><path d="M2.3 13L7 5.2L11.7 13Z" fill="#6e3a44"/><circle cx="11" cy="4.3" r="1.3" fill="#6e3a44"/></svg>
<svg style="left:187.5px;top:91.0px" width="14" height="6" viewBox="0 0 14 6"><path d="M0.6 0.6C3.5 5.4 10.5 5.4 13.4 0.6" fill="none" stroke="#a8a8a8" stroke-width="1"/></svg>
<svg style="left:207.3px;top:85.4px" width="14" height="11" viewBox="0 0 14 11"><path d="M0.3 2.3H3.600L4.600 0.500H9.400L10.400 2.300H13.700V10.600H0.300Z" fill="#e6e6e6"/><circle cx="7" cy="6.200" r="3.300" fill="none" stroke="#282828" stroke-width="1.100"/><circle cx="7" cy="6.200" r="1.400" fill="none" stroke="#282828" stroke-width="0.900"/></svg>
<svg style="left:26.5px;top:108.0px" width="7" height="8" viewBox="0 0 7 8"><path d="M0.5 0.8L6 4L0.5 7.2Z" fill="#6e6e6e"/></svg>
<svg style="left:42.0px;top:104.5px" width="15" height="15" viewBox="0 0 15 15"><rect x="0.7" y="0.7" width="13.6" height="13.6" rx="1" fill="#75503a"/><path d="M2.3 12.6L7 4.8L11.7 12.6Z" fill="#282828"/><circle cx="11.3" cy="3.8" r="1.2" fill="#282828"/></svg>
<span class="t" style="left:64.0px;top:106.4px;color:#8a8a8a;max-width:99.5px;overflow:hidden">frente.001</span>
<svg style="left:144.0px;top:104.5px;overflow:hidden" width="15" height="15" viewBox="0 0 15 15"><rect x="1" y="1" width="13" height="13" fill="none" stroke="#6e3a44" stroke-width="1.1"/><path d="M2.3 13L7 5.2L11.7 13Z" fill="#6e3a44"/><circle cx="11" cy="4.3" r="1.3" fill="#6e3a44"/></svg>
<svg style="left:187.5px;top:111.0px" width="14" height="6" viewBox="0 0 14 6"><path d="M0.6 0.6C3.5 5.4 10.5 5.4 13.4 0.6" fill="none" stroke="#a8a8a8" stroke-width="1"/></svg>
<svg style="left:207.3px;top:105.4px" width="14" height="11" viewBox="0 0 14 11"><path d="M0.3 2.3H3.600L4.600 0.500H9.400L10.400 2.300H13.700V10.600H0.300Z" fill="#e6e6e6"/><circle cx="7" cy="6.200" r="3.300" fill="none" stroke="#282828" stroke-width="1.100"/><circle cx="7" cy="6.200" r="1.400" fill="none" stroke="#282828" stroke-width="0.900"/></svg>
<div class="a" style="left:0;top:122.0px;width:235px;height:20px;background:#2b2b2b"></div>
<svg style="left:26.5px;top:128.0px" width="7" height="8" viewBox="0 0 7 8"><path d="M0.5 0.8L6 4L0.5 7.2Z" fill="#b0b0b0"/></svg>
<div class="a" style="left:40.3px;top:123.0px;width:19px;height:18px;background:#555;border:1px solid #8a8a8a;border-radius:4px"></div>
<svg style="left:42.0px;top:124.5px" width="15" height="15" viewBox="0 0 15 15"><path d="M0.900 1.100H14.100L7.500 13.600ZM4.500 3.500H10.500L7.500 9.200Z" fill="#dc9458" fill-rule="evenodd" stroke="#dc9458" stroke-width=".7" stroke-linejoin="round"/></svg>
<span class="t" style="left:64.0px;top:126.4px;color:#fff;max-width:99.5px;overflow:hidden">interior painel</span>
<svg style="left:187.5px;top:126.5px" width="14" height="10" viewBox="0 0 14 10"><path d="M0.4 4.7C3 -0.6 11 -0.6 13.600 4.7C11 10 3 10 0.4 4.700Z" fill="#e6e6e6"/><circle cx="7" cy="4.6" r="2.9" fill="#282828"/><circle cx="7" cy="4.600" r="1.500" fill="#e6e6e6"/></svg>
<svg style="left:207.3px;top:125.4px" width="14" height="11" viewBox="0 0 14 11"><path d="M0.3 2.3H3.600L4.600 0.500H9.400L10.400 2.300H13.700V10.600H0.300Z" fill="#e6e6e6"/><circle cx="7" cy="6.200" r="3.300" fill="none" stroke="#282828" stroke-width="1.100"/><circle cx="7" cy="6.200" r="1.400" fill="none" stroke="#282828" stroke-width="0.900"/></svg>
<svg style="left:26.5px;top:148.0px" width="7" height="8" viewBox="0 0 7 8"><path d="M0.5 0.8L6 4L0.5 7.2Z" fill="#6e6e6e"/></svg>
<svg style="left:42.0px;top:144.5px" width="15" height="15" viewBox="0 0 15 15"><path d="M0.900 1.100H14.100L7.500 13.600ZM4.500 3.500H10.500L7.500 9.200Z" fill="#75503a" fill-rule="evenodd" stroke="#75503a" stroke-width=".7" stroke-linejoin="round"/></svg>
<span class="t" style="left:64.0px;top:146.4px;color:#8a8a8a;max-width:99.5px;overflow:hidden">interior2</span>
<svg style="left:134.0px;top:144.5px" width="15" height="15" viewBox="0 0 15 15"><g fill="none" stroke="#1a7f68" stroke-width="1.1"><path d="M2.5 2.8H12.5L7.5 12.2Z"/><rect x="0.8" y="1.2" width="3" height="3" fill="#282828"/><rect x="11.2" y="1.2" width="3" height="3" fill="#282828"/><rect x="6" y="10.8" width="3" height="3" fill="#282828"/></g></svg>
<svg style="left:187.5px;top:151.0px" width="14" height="6" viewBox="0 0 14 6"><path d="M0.6 0.6C3.5 5.4 10.5 5.4 13.4 0.6" fill="none" stroke="#a8a8a8" stroke-width="1"/></svg>
<svg style="left:207.3px;top:145.4px" width="14" height="11" viewBox="0 0 14 11"><path d="M0.3 2.3H3.600L4.600 0.500H9.400L10.400 2.300H13.700V10.600H0.300Z" fill="#e6e6e6"/><circle cx="7" cy="6.200" r="3.300" fill="none" stroke="#282828" stroke-width="1.100"/><circle cx="7" cy="6.200" r="1.400" fill="none" stroke="#282828" stroke-width="0.900"/></svg>
<div class="a" style="left:0;top:162.0px;width:235px;height:20px;background:#2b2b2b"></div>
<svg style="left:26.5px;top:168.0px" width="7" height="8" viewBox="0 0 7 8"><path d="M0.5 0.8L6 4L0.5 7.2Z" fill="#6e6e6e"/></svg>
<svg style="left:42.0px;top:164.5px" width="15" height="15" viewBox="0 0 15 15"><path d="M0.900 1.100H14.100L7.500 13.600ZM4.500 3.500H10.500L7.500 9.200Z" fill="#75503a" fill-rule="evenodd" stroke="#75503a" stroke-width=".7" stroke-linejoin="round"/></svg>
<span class="t" style="left:64.0px;top:166.4px;color:#8a8a8a;max-width:99.5px;overflow:hidden">interior6</span>
<svg style="left:134.0px;top:164.5px" width="15" height="15" viewBox="0 0 15 15"><g fill="none" stroke="#1a7f68" stroke-width="1.1"><path d="M2.5 2.8H12.5L7.5 12.2Z"/><rect x="0.8" y="1.2" width="3" height="3" fill="#282828"/><rect x="11.2" y="1.2" width="3" height="3" fill="#282828"/><rect x="6" y="10.8" width="3" height="3" fill="#282828"/></g></svg>
<svg style="left:187.5px;top:171.0px" width="14" height="6" viewBox="0 0 14 6"><path d="M0.6 0.6C3.5 5.4 10.5 5.4 13.4 0.6" fill="none" stroke="#a8a8a8" stroke-width="1"/></svg>
<svg style="left:207.3px;top:165.4px" width="14" height="11" viewBox="0 0 14 11"><path d="M0.3 2.3H3.600L4.600 0.500H9.400L10.400 2.300H13.700V10.600H0.300Z" fill="#e6e6e6"/><circle cx="7" cy="6.200" r="3.300" fill="none" stroke="#282828" stroke-width="1.100"/><circle cx="7" cy="6.200" r="1.400" fill="none" stroke="#282828" stroke-width="0.900"/></svg>
<svg style="left:26.5px;top:188.0px" width="7" height="8" viewBox="0 0 7 8"><path d="M0.5 0.8L6 4L0.5 7.2Z" fill="#b0b0b0"/></svg>
<svg style="left:42.0px;top:184.5px" width="15" height="15" viewBox="0 0 15 15"><rect x="0.7" y="0.7" width="13.6" height="13.6" rx="1" fill="#dc9458"/><path d="M2.3 12.6L7 4.8L11.7 12.6Z" fill="#282828"/><circle cx="11.3" cy="3.8" r="1.2" fill="#282828"/></svg>
<span class="t" style="left:64.0px;top:186.4px;color:#e0e0e0;max-width:99.5px;overflow:hidden">lado</span>
<svg style="left:110.0px;top:184.5px;overflow:hidden" width="15" height="15" viewBox="0 0 15 15"><rect x="1" y="1" width="13" height="13" fill="none" stroke="#c4586a" stroke-width="1.1"/><path d="M2.3 13L7 5.2L11.7 13Z" fill="#c4586a"/><circle cx="11" cy="4.3" r="1.3" fill="#c4586a"/></svg>
<svg style="left:187.5px;top:186.5px" width="14" height="10" viewBox="0 0 14 10"><path d="M0.4 4.7C3 -0.6 11 -0.6 13.600 4.7C11 10 3 10 0.4 4.700Z" fill="#e6e6e6"/><circle cx="7" cy="4.6" r="2.9" fill="#282828"/><circle cx="7" cy="4.600" r="1.500" fill="#e6e6e6"/></svg>
<svg style="left:207.3px;top:185.4px" width="14" height="11" viewBox="0 0 14 11"><path d="M0.3 2.3H3.600L4.600 0.500H9.400L10.400 2.300H13.700V10.600H0.300Z" fill="#e6e6e6"/><circle cx="7" cy="6.200" r="3.300" fill="none" stroke="#282828" stroke-width="1.100"/><circle cx="7" cy="6.200" r="1.400" fill="none" stroke="#282828" stroke-width="0.900"/></svg>
<div class="a" style="left:0;top:202.0px;width:235px;height:20px;background:#2b2b2b"></div>
<svg style="left:26.5px;top:208.0px" width="7" height="8" viewBox="0 0 7 8"><path d="M0.5 0.8L6 4L0.5 7.2Z" fill="#b0b0b0"/></svg>
<svg style="left:42.0px;top:204.5px" width="15" height="15" viewBox="0 0 15 15"><path d="M0.900 1.100H14.100L7.500 13.600ZM4.500 3.500H10.500L7.500 9.200Z" fill="#dc9458" fill-rule="evenodd" stroke="#dc9458" stroke-width=".7" stroke-linejoin="round"/></svg>
<span class="t" style="left:64.0px;top:206.4px;color:#e0e0e0;max-width:99.5px;overflow:hidden">parachoque frente</span>
<svg style="left:187.5px;top:206.5px" width="14" height="10" viewBox="0 0 14 10"><path d="M0.4 4.7C3 -0.6 11 -0.6 13.600 4.7C11 10 3 10 0.4 4.700Z" fill="#e6e6e6"/><circle cx="7" cy="4.6" r="2.9" fill="#282828"/><circle cx="7" cy="4.600" r="1.500" fill="#e6e6e6"/></svg>
<svg style="left:207.3px;top:205.4px" width="14" height="11" viewBox="0 0 14 11"><path d="M0.3 2.3H3.600L4.600 0.500H9.400L10.400 2.300H13.700V10.600H0.300Z" fill="#e6e6e6"/><circle cx="7" cy="6.200" r="3.300" fill="none" stroke="#282828" stroke-width="1.100"/><circle cx="7" cy="6.200" r="1.400" fill="none" stroke="#282828" stroke-width="0.900"/></svg>
<svg style="left:26.5px;top:228.0px" width="7" height="8" viewBox="0 0 7 8"><path d="M0.5 0.8L6 4L0.5 7.2Z" fill="#6e6e6e"/></svg>
<svg style="left:42.0px;top:224.5px" width="15" height="15" viewBox="0 0 15 15"><path d="M0.900 1.100H14.100L7.500 13.600ZM4.500 3.500H10.500L7.500 9.200Z" fill="#75503a" fill-rule="evenodd" stroke="#75503a" stroke-width=".7" stroke-linejoin="round"/></svg>
<span class="t" style="left:64.0px;top:226.4px;color:#8a8a8a;max-width:99.5px;overflow:hidden">Plane.002</span>
<svg style="left:142.0px;top:224.5px" width="15" height="15" viewBox="0 0 15 15"><g fill="none" stroke="#1a7f68" stroke-width="1.1"><path d="M2.5 2.8H12.5L7.5 12.2Z"/><rect x="0.8" y="1.2" width="3" height="3" fill="#282828"/><rect x="11.2" y="1.2" width="3" height="3" fill="#282828"/><rect x="6" y="10.8" width="3" height="3" fill="#282828"/></g></svg>
<svg style="left:187.5px;top:231.0px" width="14" height="6" viewBox="0 0 14 6"><path d="M0.6 0.6C3.5 5.4 10.5 5.4 13.4 0.6" fill="none" stroke="#a8a8a8" stroke-width="1"/></svg>
<svg style="left:207.3px;top:225.4px" width="14" height="11" viewBox="0 0 14 11"><path d="M0.3 2.3H3.600L4.600 0.500H9.400L10.400 2.300H13.700V10.600H0.300Z" fill="#e6e6e6"/><circle cx="7" cy="6.200" r="3.300" fill="none" stroke="#282828" stroke-width="1.100"/><circle cx="7" cy="6.200" r="1.400" fill="none" stroke="#282828" stroke-width="0.900"/></svg>
<div class="a" style="left:0;top:242.0px;width:235px;height:20px;background:#2b2b2b"></div>
<svg style="left:26.5px;top:248.0px" width="7" height="8" viewBox="0 0 7 8"><path d="M0.5 0.8L6 4L0.5 7.2Z" fill="#b0b0b0"/></svg>
<svg style="left:42.0px;top:244.5px" width="15" height="15" viewBox="0 0 15 15"><path d="M0.900 1.100H14.100L7.500 13.600ZM4.500 3.500H10.500L7.500 9.200Z" fill="#dc9458" fill-rule="evenodd" stroke="#dc9458" stroke-width=".7" stroke-linejoin="round"/></svg>
<span class="t" style="left:64.0px;top:246.4px;color:#e0e0e0;max-width:99.5px;overflow:hidden">seta</span>
<svg style="left:111.0px;top:244.5px" width="15" height="15" viewBox="0 0 15 15"><g fill="none" stroke="#1fc89e" stroke-width="1.1"><path d="M2.5 2.8H12.5L7.5 12.2Z"/><rect x="0.8" y="1.2" width="3" height="3" fill="#282828"/><rect x="11.2" y="1.2" width="3" height="3" fill="#282828"/><rect x="6" y="10.8" width="3" height="3" fill="#282828"/></g></svg>
<svg style="left:187.5px;top:246.5px" width="14" height="10" viewBox="0 0 14 10"><path d="M0.4 4.7C3 -0.6 11 -0.6 13.600 4.7C11 10 3 10 0.4 4.700Z" fill="#e6e6e6"/><circle cx="7" cy="4.6" r="2.9" fill="#282828"/><circle cx="7" cy="4.600" r="1.500" fill="#e6e6e6"/></svg>
<svg style="left:207.3px;top:245.4px" width="14" height="11" viewBox="0 0 14 11"><path d="M0.3 2.3H3.600L4.600 0.500H9.400L10.400 2.300H13.700V10.600H0.300Z" fill="#e6e6e6"/><circle cx="7" cy="6.200" r="3.300" fill="none" stroke="#282828" stroke-width="1.100"/><circle cx="7" cy="6.200" r="1.400" fill="none" stroke="#282828" stroke-width="0.900"/></svg>
<svg style="left:26.5px;top:268.0px" width="7" height="8" viewBox="0 0 7 8"><path d="M0.5 0.8L6 4L0.5 7.2Z" fill="#6e6e6e"/></svg>
<svg style="left:42.0px;top:264.5px" width="15" height="15" viewBox="0 0 15 15"><path d="M0.900 1.100H14.100L7.500 13.600ZM4.500 3.500H10.500L7.500 9.200Z" fill="#75503a" fill-rule="evenodd" stroke="#75503a" stroke-width=".7" stroke-linejoin="round"/></svg>
<span class="t" style="left:64.0px;top:266.4px;color:#8a8a8a;max-width:99.5px;overflow:hidden">todomod</span>
<svg style="left:136.0px;top:264.5px" width="15" height="15" viewBox="0 0 15 15"><g fill="none" stroke="#1a7f68" stroke-width="1.1"><path d="M2.5 2.8H12.5L7.5 12.2Z"/><rect x="0.8" y="1.2" width="3" height="3" fill="#282828"/><rect x="11.2" y="1.2" width="3" height="3" fill="#282828"/><rect x="6" y="10.8" width="3" height="3" fill="#282828"/></g></svg>
<svg style="left:187.5px;top:271.0px" width="14" height="6" viewBox="0 0 14 6"><path d="M0.6 0.6C3.5 5.4 10.5 5.4 13.4 0.6" fill="none" stroke="#a8a8a8" stroke-width="1"/></svg>
<svg style="left:207.3px;top:265.4px" width="14" height="11" viewBox="0 0 14 11"><path d="M0.3 2.3H3.600L4.600 0.500H9.400L10.400 2.300H13.700V10.600H0.300Z" fill="#e6e6e6"/><circle cx="7" cy="6.200" r="3.300" fill="none" stroke="#282828" stroke-width="1.100"/><circle cx="7" cy="6.200" r="1.400" fill="none" stroke="#282828" stroke-width="0.900"/></svg>
<div class="a" style="left:0;top:282.0px;width:235px;height:20px;background:#2b2b2b"></div>
<svg style="left:26.5px;top:288.0px" width="7" height="8" viewBox="0 0 7 8"><path d="M0.5 0.8L6 4L0.5 7.2Z" fill="#6e6e6e"/></svg>
<svg style="left:42.0px;top:284.5px" width="15" height="15" viewBox="0 0 15 15"><rect x="0.7" y="0.7" width="13.6" height="13.6" rx="1" fill="#75503a"/><path d="M2.3 12.6L7 4.8L11.7 12.6Z" fill="#2b2b2b"/><circle cx="11.3" cy="3.8" r="1.2" fill="#2b2b2b"/></svg>
<span class="t" style="left:64.0px;top:286.4px;color:#8a8a8a;max-width:99.5px;overflow:hidden">tras</span>
<svg style="left:109.0px;top:284.5px;overflow:hidden" width="15" height="15" viewBox="0 0 15 15"><rect x="1" y="1" width="13" height="13" fill="none" stroke="#6e3a44" stroke-width="1.1"/><path d="M2.3 13L7 5.2L11.7 13Z" fill="#6e3a44"/><circle cx="11" cy="4.3" r="1.3" fill="#6e3a44"/></svg>
<svg style="left:187.5px;top:291.0px" width="14" height="6" viewBox="0 0 14 6"><path d="M0.6 0.6C3.5 5.4 10.5 5.4 13.4 0.6" fill="none" stroke="#a8a8a8" stroke-width="1"/></svg>
<svg style="left:207.3px;top:285.4px" width="14" height="11" viewBox="0 0 14 11"><path d="M0.3 2.3H3.600L4.600 0.500H9.400L10.400 2.300H13.700V10.600H0.300Z" fill="#e6e6e6"/><circle cx="7" cy="6.200" r="3.300" fill="none" stroke="#282828" stroke-width="1.100"/><circle cx="7" cy="6.200" r="1.400" fill="none" stroke="#282828" stroke-width="0.900"/></svg>
<svg style="left:26.5px;top:308.0px" width="7" height="8" viewBox="0 0 7 8"><path d="M0.5 0.8L6 4L0.5 7.2Z" fill="#b0b0b0"/></svg>
<svg style="left:42.0px;top:304.5px" width="15" height="15" viewBox="0 0 15 15"><path d="M0.900 1.100H14.100L7.500 13.600ZM4.500 3.500H10.500L7.500 9.200Z" fill="#dc9458" fill-rule="evenodd" stroke="#dc9458" stroke-width=".7" stroke-linejoin="round"/></svg>
<span class="t" style="left:64.0px;top:306.4px;color:#e0e0e0;max-width:99.5px;overflow:hidden">tudo</span>
<svg style="left:111.0px;top:304.5px" width="15" height="15" viewBox="0 0 15 15"><path d="M2.2 12.8L7.2 7.8" stroke="#5b86d6" stroke-width="2.6" stroke-linecap="round" fill="none"/><path d="M12.9 4.2A3.6 3.6 0 1 1 9.8 1.6L9.6 4.6L12 5.3Z" fill="none" stroke="#5b86d6" stroke-width="1.3"/></svg>
<svg style="left:131.0px;top:304.5px" width="15" height="15" viewBox="0 0 15 15"><g fill="none" stroke="#1fc89e" stroke-width="1.1"><path d="M2.5 2.8H12.5L7.5 12.2Z"/><rect x="0.8" y="1.2" width="3" height="3" fill="#282828"/><rect x="11.2" y="1.2" width="3" height="3" fill="#282828"/><rect x="6" y="10.8" width="3" height="3" fill="#282828"/></g></svg>
<svg style="left:187.5px;top:306.5px" width="14" height="10" viewBox="0 0 14 10"><path d="M0.4 4.7C3 -0.6 11 -0.6 13.600 4.7C11 10 3 10 0.4 4.700Z" fill="#e6e6e6"/><circle cx="7" cy="4.6" r="2.9" fill="#282828"/><circle cx="7" cy="4.600" r="1.500" fill="#e6e6e6"/></svg>
<svg style="left:207.3px;top:305.4px" width="14" height="11" viewBox="0 0 14 11"><path d="M0.3 2.3H3.600L4.600 0.500H9.400L10.400 2.300H13.700V10.600H0.300Z" fill="#e6e6e6"/><circle cx="7" cy="6.200" r="3.300" fill="none" stroke="#282828" stroke-width="1.100"/><circle cx="7" cy="6.200" r="1.400" fill="none" stroke="#282828" stroke-width="0.900"/></svg>
<div class="a" style="left:0;top:322.0px;width:235px;height:20px;background:#2b2b2b"></div>
<svg style="left:26.5px;top:328.0px" width="7" height="8" viewBox="0 0 7 8"><path d="M0.5 0.8L6 4L0.5 7.2Z" fill="#b0b0b0"/></svg>
<svg style="left:42.0px;top:324.5px" width="15" height="15" viewBox="0 0 15 15"><path d="M0.900 1.100H14.100L7.500 13.600ZM4.500 3.500H10.500L7.500 9.200Z" fill="#dc9458" fill-rule="evenodd" stroke="#dc9458" stroke-width=".7" stroke-linejoin="round"/></svg>
<span class="t" style="left:64.0px;top:326.4px;color:#e0e0e0;max-width:99.5px;overflow:hidden">vidro</span>
<svg style="left:120.0px;top:324.5px" width="15" height="15" viewBox="0 0 15 15"><g fill="none" stroke="#1fc89e" stroke-width="1.1"><path d="M2.5 2.8H12.5L7.5 12.2Z"/><rect x="0.8" y="1.2" width="3" height="3" fill="#282828"/><rect x="11.2" y="1.2" width="3" height="3" fill="#282828"/><rect x="6" y="10.8" width="3" height="3" fill="#282828"/></g></svg>
<svg style="left:187.5px;top:326.5px" width="14" height="10" viewBox="0 0 14 10"><path d="M0.4 4.7C3 -0.6 11 -0.6 13.600 4.7C11 10 3 10 0.4 4.700Z" fill="#e6e6e6"/><circle cx="7" cy="4.6" r="2.9" fill="#282828"/><circle cx="7" cy="4.600" r="1.500" fill="#e6e6e6"/></svg>
<svg style="left:207.3px;top:325.4px" width="14" height="11" viewBox="0 0 14 11"><path d="M0.3 2.3H3.600L4.600 0.500H9.400L10.400 2.300H13.700V10.600H0.300Z" fill="#e6e6e6"/><circle cx="7" cy="6.200" r="3.300" fill="none" stroke="#282828" stroke-width="1.100"/><circle cx="7" cy="6.200" r="1.400" fill="none" stroke="#282828" stroke-width="0.900"/></svg>
<div class="a" style="left:0;top:0;width:235px;height:22.500px;background:#2a2a2a"></div>
<div class="btn" style="left:8.0px;top:3.0px;width:31px;height:18.5px"></div>
<svg style="left:11.5px;top:4.5px" width="28" height="17" viewBox="0 0 28 17"><g fill="#e0e0e0"><rect x="1" y="1.5" width="4.500" height="3"/><rect x="6.500" y="6.500" width="7" height="3"/><rect x="6.500" y="11.500" width="7" height="3"/></g><path d="M3 4.500V13H6.500M3 8H6.500" stroke="#e0e0e0" stroke-width="1" fill="none"/><path d="M17.500 7.300l2.800 2.800 2.800-2.800" stroke="#ddd" stroke-width="1.300" fill="none"/></svg>
<div class="btn" style="left:45.0px;top:3.0px;width:31px;height:18.5px"></div>
<svg style="left:47.5px;top:4.5px" width="28" height="17" viewBox="0 0 28 17"><path d="M1 5.500V15.500H11M3 3.500V13.500H13" stroke="#ccc" stroke-width="1" fill="none"/><rect x="5" y="1" width="10.500" height="10.500" fill="#e0e0e0"/><path d="M6 10.500L9.500 5L13 10.500Z" fill="#232323"/><circle cx="13" cy="3.800" r="1.100" fill="#232323"/><path d="M18.500 7.300l2.800 2.800 2.800-2.800" stroke="#ddd" stroke-width="1.300" fill="none"/></svg>
<div class="a" style="left:93.0px;top:3.0px;width:118px;height:18.5px;background:#1d1d1d;border:1px solid #3a3a3a;border-radius:4px"></div>
<svg style="left:96.5px;top:5.5px" width="14" height="14" viewBox="0 0 14 14"><circle cx="8.300" cy="5.300" r="3.900" stroke="#ddd" stroke-width="1.200" fill="none"/><path d="M5.500 8.200L1.200 12.600" stroke="#ddd" stroke-width="1.300"/></svg>
<div class="btn" style="left:228.0px;top:3.0px;width:31px;height:18.5px"></div>
<svg style="left:230.5px;top:6.5px" width="6" height="10" viewBox="0 0 6 10"><path d="M0.500 1H6M0.800 1.500L4.500 6" stroke="#ddd" stroke-width="1.200" fill="none"/></svg>
<div class="a" style="left:228.5px;top:145.5px;width:3px;height:161px;background:#4d4d4d;border-radius:2px"></div>
<div class="a" style="left:8.5px;top:327.0px;width:210px;height:3px;background:#3c3c3c;border-radius:2px"></div>
</div>
<svg style="left:1114px;top:116px" width="8" height="13" viewBox="0 0 8 13"><rect x="0" y="0" width="9" height="13" rx="3" fill="#2c2c2c" opacity=".9"/><path d="M5.800 3L2.600 6.500L5.800 10" stroke="#bbb" stroke-width="1.100" fill="none"/></svg>
<!--PROPS-->
<div class="a" id="props" style="left:1125.5px;top:385px;width:233px;height:322px;background:#303030;border-radius:5px;overflow:hidden">
<div class="a" style="left:0;top:25.5px;width:27.5px;height:300px;background:#1c1c1c"></div>
<div class="a" style="left:0;top:26px;width:27.5px;height:35px;background:#222"></div>
<div class="btn" style="left:9.0px;top:3px;width:30.5px;height:18.5px"></div>
<svg style="left:11.5px;top:4px" width="28" height="17" viewBox="0 0 28 17"><rect x="1" y="1.800" width="14" height="5.800" rx="2.900" fill="#e0e0e0"/><rect x="1" y="9.400" width="14" height="5.800" rx="2.900" fill="#e0e0e0"/><rect x="3.500" y="3.300" width="5" height="2.800" rx="1.400" fill="#232323"/><rect x="7.500" y="10.900" width="5" height="2.800" rx="1.400" fill="#232323"/><path d="M18.500 7.300l2.800 2.800 2.800-2.800" stroke="#ddd" stroke-width="1.300" fill="none"/></svg>
<div class="a" style="left:65.0px;top:3px;width:118px;height:18.5px;background:#1d1d1d;border:1px solid #3a3a3a;border-radius:4px"></div>
<svg style="left:68.5px;top:5.5px" width="14" height="14" viewBox="0 0 14 14"><circle cx="8.300" cy="5.300" r="3.900" stroke="#ddd" stroke-width="1.200" fill="none"/><path d="M5.500 8.200L1.200 12.600" stroke="#ddd" stroke-width="1.300"/></svg>
<div class="btn" style="left:207.0px;top:3px;width:19px;height:18.5px"></div>
<svg style="left:212.0px;top:9.5px" width="9" height="7" viewBox="0 0 9 7"><path d="M1 1.500l3.300 3.300 3.300-3.300" stroke="#ddd" stroke-width="1.300" fill="none"/></svg>
<svg style="left:38.0px;top:35.5px" width="15" height="15" viewBox="0 0 15 15"><rect x="3.500" y="3.500" width="8" height="8" fill="#e6e6e6"/><path d="M0.600 4V0.600H4M11 0.600H14.400V4M14.400 11V14.400H11M4 14.400H0.600V11" stroke="#ccc" stroke-width="1.100" fill="none"/></svg>
<span class="t" style="left:61.8px;top:36.5px">interior painel</span>
<svg style="left:209.0px;top:35.5px" width="15" height="15" viewBox="0 0 15 15"><path d="M9.300 1.200L13.800 5.700L12.500 6.300L10.300 5.900L7.800 8.400L7.600 11.300L3.700 7.400L6.600 7.200L9.100 4.700L8.700 2.500Z" fill="none" stroke="#999" stroke-width="1" stroke-linejoin="round"/><path d="M5.600 9.400L1 14" stroke="#999" stroke-width="1.100"/></svg>
<div class="btn" style="left:36.0px;top:69.5px;width:190.5px;height:19px"></div>
<span class="t" style="left:43.5px;top:72.5px">Add Modifier</span>
<svg style="left:215.0px;top:76px" width="9" height="7" viewBox="0 0 9 7"><path d="M1 1.500l3.300 3.300 3.300-3.300" stroke="#ddd" stroke-width="1.300" fill="none"/></svg>
<div class="a" style="left:1.500px;top:246px;width:26px;height:26px;background:#303030;border-radius:4px 0 0 4px"></div>
<div class="a" style="left:3px;top:65px;width:24px;height:1px;background:#232323"></div>
<div class="a" style="left:3px;top:213px;width:24px;height:1px;background:#232323"></div>
<svg style="left:6.3px;top:38.5px" width="16" height="16" viewBox="0 0 16 16"><g fill="#d0d0d0"><rect x="2.700" y="1" width="1.600" height="7"/><path d="M1.500 9.500a2 2 0 0 1 4 0v3a2 2 0 0 1 -4 0Z"/><path d="M9 1.500v3.500a2 2 0 0 0 1.300 1.900V14a1.200 1.200 0 0 0 2.400 0V6.900A2 2 0 0 0 14 5V1.500h-1.300V4.500h-2.400V1.500Z"/></g></svg>
<svg style="left:6.3px;top:74.0px" width="16" height="16" viewBox="0 0 16 16"><g fill="none" stroke="#d0d0d0" stroke-width="1.200"><rect x="1.500" y="4.500" width="13" height="9.500" rx="1"/><path d="M4 4.500V2.500H7.500V4.500M10.500 4V1.500H13V4"/><path d="M4 8H10M4 11H10" stroke-width="1.100"/></g><rect x="11.500" y="7" width="2" height="2" fill="#d0d0d0"/></svg>
<svg style="left:6.3px;top:102.8px" width="16" height="16" viewBox="0 0 16 16"><g fill="#d0d0d0"><path d="M1.500 2.500H14.500V8H12.500V6H3.500V8H1.500Z"/><path d="M4 7H12V15H4Z" fill="none" stroke="#d0d0d0" stroke-width="1.200"/><path d="M5.500 13.500L8 10L10.500 13.500Z"/><circle cx="10.500" cy="9" r="0.800"/></g></svg>
<svg style="left:6.3px;top:130.6px" width="16" height="16" viewBox="0 0 16 16"><path d="M1 5.500V15H10.500M3 3.500V13H12.500" stroke="#bbb" stroke-width="1" fill="none"/><rect x="5" y="1" width="10" height="10" fill="#d0d0d0"/><path d="M6 10L9.300 5L12.600 10Z" fill="#1c1c1c"/><circle cx="12.800" cy="3.600" r="1.100" fill="#1c1c1c"/></svg>
<svg style="left:6.3px;top:158.5px" width="16" height="16" viewBox="0 0 16 16"><path d="M4.200 1.500L7.300 11.500H1Z" fill="#b8b8b8"/><circle cx="12.800" cy="3.300" r="1.700" fill="#d0d0d0"/><circle cx="10.800" cy="10.800" r="3.400" fill="none" stroke="#d0d0d0" stroke-width="1.200"/><circle cx="10.800" cy="10.800" r="1.300" fill="#d0d0d0"/></svg>
<svg style="left:6.3px;top:186.5px" width="16" height="16" viewBox="0 0 16 16"><circle cx="8" cy="8" r="6.300" fill="none" stroke="#c75365" stroke-width="1.300"/><path d="M4 4.500C6 4 7 5 8.500 5.500C9.500 6.500 8 8 9 9C8 10.500 7 11 6.500 13C5 11 5.500 9.500 4 8.500C3 7 3 5.500 4 4.500ZM10.500 3.500C12 4 13 5 13.500 6.500C12.500 7 11.500 6.500 11 5.500Z" fill="#c75365"/><path d="M1.500 13.500C5 10 11 5 14.500 1.500" stroke="#c75365" stroke-width="1" fill="none"/></svg>
<svg style="left:6.3px;top:223.0px" width="16" height="16" viewBox="0 0 16 16"><rect x="3.500" y="3.500" width="9" height="9" fill="#e39a5c"/><path d="M0.700 4V0.700H4M12 0.700H15.300V4M15.300 12V15.300H12M4 15.300H0.700V12" stroke="#e39a5c" stroke-width="1.100" fill="none"/></svg>
<svg style="left:6.3px;top:251.0px" width="16" height="16" viewBox="0 0 16 16"><path d="M2.500 13.500L8 8" stroke="#6a9ef5" stroke-width="3" stroke-linecap="round" fill="none"/><path d="M14.300 5.200A4.200 4.200 0 1 1 10.600 1.700L10.300 5L13.200 5.800Z" fill="#6a9ef5"/><circle cx="10.300" cy="5.500" r="1.300" fill="#303030"/></svg>
<svg style="left:6.3px;top:279.3px" width="16" height="16" viewBox="0 0 16 16"><g stroke="#5b86d6" stroke-width="1.200" fill="#5b86d6"><circle cx="3.500" cy="3.500" r="2.300"/><circle cx="13.500" cy="4" r="1"/><circle cx="3.500" cy="14" r="1"/><circle cx="13.500" cy="13.500" r="1.500"/><path d="M3.500 3.500H13.500M3.500 3.500V14M3.500 3.500L13.500 13.500" fill="none"/></g></svg>
<svg style="left:6.3px;top:307.0px" width="16" height="16" viewBox="0 0 16 16"><circle cx="7.500" cy="9" r="5.800" fill="none" stroke="#5b86d6" stroke-width="1.300" stroke-dasharray="27 9.500" transform="rotate(-30 7.500 9)"/><circle cx="7.500" cy="9" r="2.400" fill="#5b86d6"/><circle cx="13.200" cy="3.200" r="1.600" fill="#5b86d6"/></svg>
</div>
<!--TIMELINE-->
<div class="a" id="tl" style="left:1px;top:659px;width:1121px;height:48px;background:#1d1d1d;border-radius:5px;overflow:hidden">
<div class="a" style="left:0;top:0;width:1121px;height:25.300px;background:#303030"></div>
<span class="t" style="left:16.5px;top:31px;width:40px;text-align:center;color:#b4b4b4">0</span>
<span class="t" style="left:99.94px;top:31px;width:40px;text-align:center;color:#b4b4b4">20</span>
<span class="t" style="left:183.38px;top:31px;width:40px;text-align:center;color:#b4b4b4">40</span>
<span class="t" style="left:266.82px;top:31px;width:40px;text-align:center;color:#b4b4b4">60</span>
<span class="t" style="left:350.26px;top:31px;width:40px;text-align:center;color:#b4b4b4">80</span>
<span class="t" style="left:433.7px;top:31px;width:40px;text-align:center;color:#b4b4b4">100</span>
<span class="t" style="left:517.14px;top:31px;width:40px;text-align:center;color:#b4b4b4">120</span>
<span class="t" style="left:600.58px;top:31px;width:40px;text-align:center;color:#b4b4b4">140</span>
<span class="t" style="left:684.02px;top:31px;width:40px;text-align:center;color:#b4b4b4">160</span>
<span class="t" style="left:767.46px;top:31px;width:40px;text-align:center;color:#b4b4b4">180</span>
<span class="t" style="left:850.9px;top:31px;width:40px;text-align:center;color:#b4b4b4">200</span>
<span class="t" style="left:934.34px;top:31px;width:40px;text-align:center;color:#b4b4b4">220</span>
<span class="t" style="left:1017.78px;top:31px;width:40px;text-align:center;color:#b4b4b4">240</span>
<div class="a" style="left:41.5px;top:28px;width:24px;height:14px;background:#4772b3;border-radius:3px"></div>
<div class="a" style="left:52.7px;top:40px;width:1.500px;height:9px;background:#4772b3"></div>
<span class="t" style="left:41.5px;top:31px;width:24px;text-align:center;color:#fff">4</span>
<div class="a" style="left:7px;top:37.7px;width:1106px;height:8.300px;background:#1d1d1d"></div>
<div class="a" style="left:8px;top:37.7px;width:1104.500px;height:8px;background:#5b5b5b;border-radius:4px"></div>
<div class="a" style="left:8.5px;top:38.2px;width:7px;height:7px;background:#2e2e2e;border:1.200px solid #6a6a6a;border-radius:4px"></div>
<div class="a" style="left:1104.5px;top:38.2px;width:7px;height:7px;background:#2e2e2e;border:1.200px solid #6a6a6a;border-radius:4px"></div>
<div class="btn" style="left:8px;top:3.5px;width:30.500px;height:18.700px"></div>
<svg style="left:11.2px;top:4.4px" width="17" height="17" viewBox="0 0 17 17"><circle cx="8" cy="8.500" r="6.900" fill="#e6e6e6"/><path d="M10.300 4.300L6.300 8.500L10.300 12.700" stroke="#232323" stroke-width="2" fill="none"/><path d="M12 3.500C13.800 6 13.800 11 12 13.500" stroke="#232323" stroke-width="1.200" fill="none"/></svg>
<svg style="left:27.5px;top:10px" width="9" height="7" viewBox="0 0 9 7"><path d="M1 1.500l3.300 3.300 3.300-3.300" stroke="#ddd" stroke-width="1.300" fill="none"/></svg>
<div class="btn" style="left:44.7px;top:3.5px;width:134px;height:18.700px"></div>
<div class="a" style="left:116.8px;top:4.5px;width:1px;height:16.700px;background:#3e3e3e"></div>
<span class="t" style="left:52px;top:6.5px">Playback</span>
<svg style="left:105.5px;top:10px" width="9" height="7" viewBox="0 0 9 7"><path d="M1 1.500l3.300 3.300 3.300-3.300" stroke="#ddd" stroke-width="1.300" fill="none"/></svg>
<span class="t" style="left:124.5px;top:6.5px">Keying</span>
<svg style="left:166.5px;top:10px" width="9" height="7" viewBox="0 0 9 7"><path d="M1 1.500l3.300 3.300 3.300-3.300" stroke="#ddd" stroke-width="1.300" fill="none"/></svg>
<span class="t" style="left:187.7px;top:6.5px">View</span>
<span class="t" style="left:228.5px;top:6.5px">Marker</span>
<div class="btn" style="left:467.5px;top:3.5px;width:39px;height:18.700px;background:#2a2a2a;border-color:#383838"></div>
<div class="a" style="left:468px;top:4px;width:18px;height:17.700px;background:#545454;border-radius:3px 0 0 3px"></div>
<div class="a" style="left:473px;top:9px;width:8px;height:8px;background:#e6e6e6;border-radius:4px"></div>
<svg style="left:492px;top:10px" width="9" height="7" viewBox="0 0 9 7"><path d="M1 1.500l3.300 3.300 3.300-3.300" stroke="#5a5a5a" stroke-width="1.300" fill="none"/></svg>
<div class="a" style="left:512.7px;top:3.5px;width:118.500px;height:18.700px;background:#545454;border-radius:4px;border:1px solid #5c5c5c"></div>
<div class="a" style="left:531.95px;top:4px;width:1px;height:17.700px;background:#3a3a3a"></div>
<div class="a" style="left:551.7px;top:4px;width:1px;height:17.700px;background:#3a3a3a"></div>
<div class="a" style="left:571.45px;top:4px;width:1px;height:17.700px;background:#3a3a3a"></div>
<div class="a" style="left:591.2px;top:4px;width:1px;height:17.700px;background:#3a3a3a"></div>
<div class="a" style="left:610.95px;top:4px;width:1px;height:17.700px;background:#3a3a3a"></div>
<svg style="left:512.7px;top:3.5px" width="119" height="19" viewBox="0 0 119 19"><g fill="#fff"><rect x="4.800" y="4.500" width="1.800" height="10"/><path d="M7 9.500L13.500 4.500V14.500Z"/><path d="M21.500 9.500L25.500 5.500L29.500 9.500L25.500 13.500Z"/><path d="M30 9.500L35.500 5.300V13.700Z"/><path d="M44 9.500L54.500 4V15Z"/><path d="M75 9.500L64.500 4V15Z"/><path d="M88.500 9.500L83 5.300V13.700Z"/><path d="M89 9.500L93 5.500L97 9.500L93 13.500Z"/><path d="M111.500 9.500L105 4.500V14.500Z"/><rect x="112" y="4.500" width="1.800" height="10"/></g></svg>
<div class="a" style="left:835.5px;top:3.5px;width:74px;height:18.700px;background:#4e4e4e;border-radius:4px"></div>
<span class="t" style="left:835.5px;top:6.5px;width:71px;text-align:center">4</span>
<div class="a" style="left:916px;top:3.5px;width:197.500px;height:18.700px;background:#4e4e4e;border-radius:4px"></div>
<div class="a" style="left:934.5px;top:3.5px;width:1px;height:18.700px;background:#3a3a3a"></div>
<div class="a" style="left:1026px;top:3.5px;width:1px;height:18.700px;background:#3a3a3a"></div>
<svg style="left:918px;top:4.5px" width="16" height="17" viewBox="0 0 16 17"><circle cx="7.500" cy="9.500" r="5.600" fill="none" stroke="#e0e0e0" stroke-width="1.200"/><path d="M7.500 6V9.500H10.500M5.500 2H9.500M12 4L13.500 5.500" stroke="#e0e0e0" stroke-width="1.200" fill="none"/></svg>
<span class="t" style="left:950.5px;top:6.5px">Start</span>
<span class="t" style="left:979px;top:6.5px;width:34px;text-align:right">1</span>
<span class="t" style="left:1042.5px;top:6.5px">End</span>
<span class="t" style="left:1059px;top:6.5px;width:41px;text-align:right">250</span>
</div>
<svg style="left:1px;top:696px" width="8" height="12" viewBox="0 0 8 12"><path d="M0 3L5 8" stroke="#888" stroke-width="1"/></svg>
<svg style="left:1113px;top:694px" width="9" height="14" viewBox="0 0 9 14"><path d="M8 9L3 14M7 1V8" stroke="#666" stroke-width="1.200"/></svg>
<!--STATUS-->
<div class="a" id="status" style="left:0;top:707.500px;width:1360px;height:21px;background:#1a1a1a">
<svg style="left:11.5px;top:3px" width="11" height="16" viewBox="0 0 11 16"><rect x="1" y="1" width="9" height="14" rx="3.800" fill="none" stroke="#b0b0b0" stroke-width="1.200"/><path d="M1 7V4.800A3.800 3.800 0 0 1 4.800 1H5.500V7Z" fill="#b0b0b0"/></svg>
<span class="t" style="left:34px;top:4.500px;color:#a6a6a6">Select</span>
<svg style="left:289.5px;top:3px" width="11" height="16" viewBox="0 0 11 16"><rect x="1" y="1" width="9" height="14" rx="3.800" fill="none" stroke="#b0b0b0" stroke-width="1.200"/><rect x="4.200" y="2.800" width="2.600" height="5" rx="1.200" fill="#b0b0b0"/></svg>
<span class="t" style="left:312px;top:4.500px;color:#a6a6a6">Rotate View</span>
<svg style="left:568px;top:3px" width="11" height="16" viewBox="0 0 11 16"><rect x="1" y="1" width="9" height="14" rx="3.800" fill="none" stroke="#b0b0b0" stroke-width="1.200"/><path d="M10 7V4.800A3.800 3.800 0 0 0 6.200 1H5.500V7Z" fill="#b0b0b0"/></svg>
<span class="t" style="left:590.500px;top:4.500px;color:#a6a6a6">Object Context Menu</span>
<div class="a" style="left:853.700px;top:2.300px;width:230px;height:16.500px;background:#1b212e;border:1px solid #3b4150;border-radius:4px;overflow:hidden"><div class="a" style="left:0;top:0;width:24px;height:16px;background:#27426e"></div></div>
<svg style="left:859px;top:4px" width="14" height="15" viewBox="0 0 14 15"><path d="M1.500 0.500H12.500A1.200 1.200 0 0 1 13.700 1.700V9.800A1.200 1.200 0 0 1 12.500 11H6.500L3.500 14V11H1.500A1.200 1.200 0 0 1 0.300 9.800V1.700A1.200 1.200 0 0 1 1.500 0.500Z" fill="#fff"/><rect x="6" y="2" width="2.200" height="2" fill="#1b2a4a"/><path d="M5 5H8.200V8.500H9.300V9.700H5V8.500H6V6.200H5Z" fill="#1b2a4a"/></svg>
<span class="t" style="left:884px;top:4.500px;letter-spacing:.05px">Saved "stepvantentativa3.blend"</span>
<span class="t" style="left:1321.500px;top:4.500px;color:#8a8a8a">3.4.1</span>
</div>
<!--TASKBAR-->
<div class="a seg" id="task" style="left:0;top:728px;width:1360px;height:40px;background:linear-gradient(90deg,#1c323b 0%,#21363f 28%,#1f333e 48%,#1c2d3d 62%,#1a2742 80%,#19233f 100%);overflow:hidden">
<svg style="left:16px;top:12px" width="17" height="17" viewBox="0 0 17 17"><path d="M0 2.400L6.900 1.400V8H0ZM7.700 1.300L16.500 0V8H7.700ZM0 8.800H6.900V15.400L0 14.400ZM7.700 8.800H16.500V16.800L7.700 15.500Z" fill="#fff"/></svg>
<div class="a" style="left:48px;top:1px;width:288px;height:40px;background:#313131;border:1px solid #585858;border-bottom:none"></div>
<svg style="left:59px;top:12px" width="18" height="18" viewBox="0 0 18 18"><circle cx="11" cy="6.800" r="5.200" stroke="#e8e8e8" stroke-width="1.300" fill="none"/><path d="M7.300 10.600L1 17" stroke="#e8e8e8" stroke-width="1.400"/></svg>
<span class="t seg" style="left:88px;top:10.500px;font-size:15px;line-height:19px;height:19px;color:#d8d8d8;letter-spacing:-.68px">Pesquisar</span>
<svg style="left:250px;top:-2px;overflow:hidden" width="85.500" height="42" viewBox="250 726 85.500 42"><defs><linearGradient id="mp" x1="0" y1="0" x2="1" y2="0"><stop offset="0" stop-color="#5f9420"/><stop offset=".45" stop-color="#7da528"/><stop offset=".6" stop-color="#b59a2c"/><stop offset=".8" stop-color="#c08c2e"/><stop offset="1" stop-color="#8f9a24"/></linearGradient><linearGradient id="mp2" x1="0" y1="0" x2="0" y2="1"><stop offset="0" stop-color="#a6ab2c"/><stop offset="1" stop-color="#5f8f1e"/></linearGradient></defs><path d="M255.500 768C258 760 263 750 269.200 746.200C272 746 275 748.500 277.800 748.800C283 746 289 735 296.300 732.300C300 733 302.500 739 306.300 741.900C309 743.500 313 743 316.200 743.900C322 746 328 750 332.700 752.500C335 754 336 756 336 757V768Z" fill="url(#mp)"/><path d="M256 768C260 758 266 752 272 751C280 750 290 751 300 753C312 755 326 758 336 762V768Z" fill="url(#mp2)"/><path d="M313.500 754.500L336 762.500V766L312 758.500Z" fill="#d9d2bd"/><path d="M270 754.500C278 755 284 758 290 762C293 764 296 766 297 768M264 758C268 763 274 764.500 281 764M260.500 762C262 766 265 768 269 768.500M283 752.500C286 754.500 289 755 293 755M290.500 759C295 762.500 303 762.500 308 760.500M310.500 761.500C313 764 317 767 321 768.500" stroke="#e4dfd0" stroke-width="1.700" fill="none" stroke-linecap="round"/><path d="M291.400 757L293 750L296.300 745.800L299 751.500L304.500 752L306.500 748L309.200 744.200L312.200 750L313 754.500L312.500 757L298.500 759.500Z" fill="#d4cebf"/><path d="M291.400 757L293 750L296.300 745.800L298.500 759.500Z" fill="#9c968a"/><path d="M304.500 752L306.500 748L309.200 744.200L308 753Z" fill="#aaa498"/><circle cx="295.300" cy="751.500" r="0.900" fill="#4a3d1e"/><circle cx="308.700" cy="749.300" r="0.900" fill="#4a3d1e"/></svg>
<svg style="left:350px;top:10px" width="20" height="20" viewBox="350 738 20 20"><g fill="none" stroke="#fff" stroke-width="1.200"><rect x="352.600" y="745.100" width="9.400" height="5"/><path d="M352 742.600V740.500H362.600V742.600M352 752.700V754.800H362.600V752.700"/><path d="M366.500 739.800V755.300" stroke-width="1.400"/></g><rect x="365.200" y="744" width="2.600" height="3" fill="#fff"/></svg>
<svg style="left:399px;top:7.600px" width="24.400" height="24.400" viewBox="0 0 24 24"><defs><linearGradient id="eg1" x1="0" y1="0" x2="1" y2="0"><stop offset="0" stop-color="#30b2ea"/><stop offset=".55" stop-color="#36c3b0"/><stop offset="1" stop-color="#5ddc55"/></linearGradient><linearGradient id="eg2" x1="0" y1="0" x2="0" y2="1"><stop offset="0" stop-color="#1f8fe0"/><stop offset="1" stop-color="#1662c0"/></linearGradient></defs><path d="M0.300 11.500C0.800 5 6 0.200 12 0.200C18.800 0.200 23.800 5.300 23.800 11.200C23.800 14.500 21.500 17 18 17C15.500 17 14 16 14 14.800C14 13.800 15.300 13.500 15.300 11.800C15.300 9.500 13 7.600 10 7.600C5.500 7.600 1.500 10.500 0.300 11.500Z" fill="url(#eg1)"/><path d="M0.300 11.500C2 8.500 6 7.300 9.500 7.600C6.500 8.800 5.200 11.800 6 15C7 19 10.500 21.800 15 21.800C17 21.800 19.500 21.200 21 20C19 22.500 15.800 23.900 12 23.900C5.500 23.900 0 18.500 0.300 11.500Z" fill="url(#eg2)"/><path d="M9.500 7.600C7 9.500 6.800 13 8.300 16C10 19.500 14 21.300 17.500 20.800C19.500 20.500 21.500 19.300 22.500 17.800C21 18.800 19 19 17 18.700C13.500 18.200 11 15.500 11 12.500C11 10.500 12 9 13 8.300C12 7.800 10.800 7.500 9.500 7.600Z" fill="#0f56a8"/></svg>
<svg style="left:446px;top:6px" width="28" height="28" viewBox="446 734 28 28"><ellipse cx="458.800" cy="749.300" rx="10.300" ry="5.500" fill="#a9adb3" transform="rotate(-14 458.800 749.300)"/><ellipse cx="460" cy="745.300" rx="10.800" ry="6.300" fill="#f6f6f6" stroke="#e03a3f" stroke-width="1.300" transform="rotate(-14 460 745.300)"/><path d="M456 743L462 749.500L465.500 754M464 741L461.500 748.500L466.500 750.500" stroke="#7d8288" stroke-width="1.100" fill="none"/><ellipse cx="464.800" cy="756" rx="1.900" ry="2.900" fill="none" stroke="#2a97e2" stroke-width="1.500" transform="rotate(25 464.800 756)"/><ellipse cx="468.900" cy="752.600" rx="1.900" ry="2.900" fill="none" stroke="#2a97e2" stroke-width="1.500" transform="rotate(65 468.900 752.600)"/></svg>
<svg style="left:496.700px;top:7.700px" width="24" height="24" viewBox="0 0 24 24"><circle cx="12" cy="12" r="12" fill="#e33b2e"/><path d="M12 12L1.600 18A12 12 0 0 1 1.600 6Z M1.600 6" fill="#e33b2e"/><path d="M12 12L1.610 6A12 12 0 0 0 12 24L17.200 15Z" fill="#2da94f"/><path d="M12 12H24A12 12 0 0 1 12 24L17.200 15Z" fill="#fdd23a"/><path d="M1.610 6A12 12 0 0 1 22.390 6H12Z" fill="#e33b2e"/><path d="M22.390 6A12 12 0 0 1 12 24L17.200 15A6 6 0 0 0 17.200 9L12 6Z" fill="#fdd23a"/><circle cx="12" cy="12" r="5.600" fill="#fff"/><circle cx="12" cy="12" r="4.400" fill="#4086f4"/></svg>
<svg style="left:546.500px;top:10px" width="23" height="20" viewBox="0 0 23 20"><path d="M0.500 1.500A1 1 0 0 1 1.500 0.500H8L10 2.500H21.500A1 1 0 0 1 22.500 3.500V5H0.500Z" fill="#e8a82e"/><rect x="0.500" y="4" width="22" height="14.500" rx="1" fill="#fcd25e"/><path d="M5.500 12H17.500V19H14V15.500H9V19H5.500Z" fill="#3a97e8"/></svg>
<svg style="left:594.700px;top:7.700px" width="24" height="24" viewBox="0 0 24 24"><circle cx="12" cy="12" r="12" fill="#1ed760"/><path d="M5 8.300C9.500 6.800 15 7.200 19.300 9.700M6 12C10 10.900 14.500 11.300 18 13.400M7 15.500C10 14.700 13.500 15 16.500 16.700" stroke="#111" stroke-width="2" stroke-linecap="round" fill="none"/></svg>
<svg style="left:644px;top:8px" width="24" height="23" viewBox="0 0 24 23"><rect x="0" y="0" width="24" height="23" rx="4" fill="#151515"/><rect x="1" y="1" width="22" height="21" rx="3.500" fill="none" stroke="#444" stroke-width=".8"/><path d="M10 3L5 14H12L13 11H9.500L13 3Z" fill="#f0c030"/><path d="M14 9L11 19H17.500L20.500 9ZM15.500 11.500H17L16.500 13H15ZM14.500 15H16L15.500 16.500H14Z" fill="#39a8f0" fill-rule="evenodd"/><path d="M14 4L21 4L19 8H13Z" fill="#8fd0ff"/></svg>
<svg style="left:693px;top:7.700px" width="24" height="24" viewBox="0 0 24 24"><circle cx="12" cy="12" r="12" fill="#5865f2"/><path d="M7 8C9 7 10 6.800 10.500 6.800L11 7.700H13L13.500 6.800C14 6.800 15 7 17 8C18.500 10.500 19.300 13.500 19 16.500C17.500 17.500 16.500 17.800 15.500 18L14.700 16.800L15.500 16.300C13 17.300 11 17.300 8.500 16.300L9.300 16.800L8.500 18C7.500 17.800 6.500 17.500 5 16.500C4.700 13.500 5.500 10.500 7 8Z" fill="#fff"/><ellipse cx="9.700" cy="12.800" rx="1.500" ry="1.700" fill="#5865f2"/><ellipse cx="14.300" cy="12.800" rx="1.500" ry="1.700" fill="#5865f2"/></svg>
<div class="a" style="left:730px;top:0;width:48px;height:40px;background:#3f505b"></div>
<svg style="left:741.8px;top:8.5px" width="23.3" height="23.3" viewBox="0 0 24 24"><ellipse cx="15.700" cy="13.400" rx="5.200" ry="4.800" fill="#fff"/><path fill="#ea7600" fill-rule="evenodd" d="M7.350 14.831c.006.314.106.922.256 1.398a7.372 7.372 0 0 0 1.593 2.757 8.227 8.227 0 0 0 2.787 2.001 8.947 8.947 0 0 0 3.660.760 8.964 8.964 0 0 0 3.657-.772 8.285 8.285 0 0 0 2.785-2.010 7.428 7.428 0 0 0 1.592-2.762 6.964 6.964 0 0 0 .25-3.074 7.123 7.123 0 0 0-1.016-2.779 7.764 7.764 0 0 0-1.852-2.043h.002L13.566 2.550l-.02-.015c-.492-.378-1.319-.376-1.860.002-.547.382-.609 1.015-.123 1.415l-.001.001 3.126 2.543-9.530.01h-.013c-.788.001-1.545.518-1.695 1.172-.154.665.381 1.217 1.200 1.220V8.900l4.830-.01-8.620 6.616-.034.025c-.813.622-1.075 1.658-.563 2.313.52.667 1.625.668 2.447.004L7.414 14s-.069.520-.063.831zm12.090 1.741c-.97.988-2.326 1.548-3.795 1.550-1.470.004-2.827-.552-3.797-1.538a4.510 4.510 0 0 1-1.036-1.622 4.282 4.282 0 0 1 .282-3.519 4.702 4.702 0 0 1 1.153-1.371c.942-.768 2.141-1.183 3.396-1.185 1.256-.002 2.455.410 3.398 1.175.48.391.87.854 1.152 1.367a4.280 4.280 0 0 1 .522 1.706 4.236 4.236 0 0 1-.239 1.811 4.540 4.540 0 0 1-1.035 1.626"/><path fill="#265787" d="M12.51 13.214c.046-.8.438-1.506 1.030-2.006a3.424 3.424 0 0 1 2.212-.790c.85 0 1.631.3 2.211.79.592.5.983 1.206 1.028 2.005.045.823-.285 1.586-.865 2.153a3.389 3.389 0 0 1-2.374.938 3.393 3.393 0 0 1-2.376-.938c-.58-.567-.91-1.330-.865-2.152"/></svg>
<div class="a" style="left:489px;top:38px;width:40px;height:2px;background:#76b9ed"></div>
<div class="a" style="left:685px;top:38px;width:40px;height:2px;background:#76b9ed"></div>
<div class="a" style="left:730px;top:38px;width:48px;height:2px;background:#76b9ed"></div>
<svg style="left:1014px;top:8px" width="24" height="24" viewBox="0 0 24 24"><defs><linearGradient id="mn" x1="0" y1="0" x2="0" y2="1"><stop offset="0" stop-color="#fdc533"/><stop offset="1" stop-color="#f08a1c"/></linearGradient></defs><path d="M14.500 1.500C19.500 3 23 8 22 14C21 19.500 16 23 10.500 22.500C6.500 22 3 19.500 1.500 16C5 18 10 17.500 13 14C16 10.500 16.500 5.500 14.500 1.500Z" fill="url(#mn)"/></svg>
<span class="t seg" style="left:1047px;top:10.500px;font-size:14px;line-height:19px;height:19px;color:#fff;letter-spacing:-.6px">18°C</span>
<span class="t seg" style="left:1084.500px;top:10.500px;font-size:14px;line-height:19px;height:19px;color:#fff;letter-spacing:.05px">Limpo</span>
<svg style="left:1146.500px;top:15.500px" width="13" height="8" viewBox="0 0 13 8"><path d="M0.800 7.200L6.500 1.500L12.200 7.200" stroke="#fff" stroke-width="1.300" fill="none"/></svg>
<svg style="left:1169px;top:11px" width="16" height="18" viewBox="0 0 16 18"><g fill="none" stroke="#fff" stroke-width="1.100"><rect x="2.200" y="5.500" width="7.500" height="7" rx="1.500"/><path d="M9.700 8L13.500 6V12L9.700 10"/><path d="M3 3C4.500 1.200 8 1.200 9.500 3M3 15C4.500 16.800 8 16.800 9.500 15"/></g></svg>
<svg style="left:1192px;top:12px" width="18" height="17" viewBox="0 0 18 17"><g fill="none" stroke="#fff" stroke-width="1.100"><rect x="4.500" y="2.500" width="12.500" height="9"/><path d="M10.700 11.500V15M7 15.500H14.500"/><rect x="0.800" y="0.800" width="4.500" height="6.500" fill="#1a2640"/><path d="M2 3H4"/></g></svg>
<svg style="left:1216px;top:11px" width="18" height="18" viewBox="0 0 18 18"><g fill="none" stroke="#fff" stroke-width="1.100"><path d="M1 6.500H4L8 2.800V15.200L4 11.500H1Z"/><path d="M10.500 6.500C11.500 8 11.500 10 10.500 11.500M12.800 4.500C14.500 7 14.500 11 12.800 13.500M15 2.800C17.500 6.500 17.500 11.500 15 15.200"/></g></svg>
<span class="t seg" style="left:1232px;top:4px;width:80px;text-align:center;font-size:12px;line-height:15px;height:15px;color:#fff;letter-spacing:-.5px">20:30</span>
<span class="t seg" style="left:1232px;top:22px;width:80px;text-align:center;font-size:12px;line-height:15px;height:15px;color:#fff;letter-spacing:-.25px">18/04/2023</span>
<svg style="left:1318px;top:11px" width="26" height="26" viewBox="0 0 26 26"><path d="M1 1.500H17V13.500H6.500L3 17V13.500H1Z" fill="#fff"/><path d="M3.500 4.500H14.500M3.500 7.500H14.500M3.500 10.500H14.500" stroke="#1a2640" stroke-width="1"/><circle cx="16.500" cy="16.500" r="8" fill="#3a3a3a" stroke="#1a2338" stroke-width="1.500"/></svg>
<span class="t seg" style="left:1326.500px;top:20.500px;width:16px;text-align:center;font-size:11px;font-weight:bold;line-height:13px;color:#fff">2</span>
</div>
<!--TOPRIGHT-->
<div class="a" style="left:963.3px;top:26.300px;width:191.20000000000005px;height:19.500px;background:#1d1d1d;border:1px solid #3d3d3d;border-radius:4px"></div>
<div class="a" style="left:964.3px;top:27.300px;width:30.0px;height:17.500px;background:#282828;border-radius:3px 0 0 3px"></div>
<div class="a" style="left:994.3px;top:27.300px;width:1px;height:17.500px;background:#3a3a3a"></div>
<div class="a" style="left:1113.8px;top:27.300px;width:20.200000000000045px;height:17.500px;background:#545454"></div>
<div class="a" style="left:1134.7px;top:27.300px;width:18.8px;height:17.500px;background:#2b2b2b;border-radius:0 3px 3px 0"></div>
<svg style="left:966.500px;top:28px" width="16" height="16" viewBox="0 0 16 16"><path d="M4.200 1.500L7.300 11.500H1Z" fill="#c8c8c8"/><circle cx="12.800" cy="3.300" r="1.700" fill="#e0e0e0"/><circle cx="10.800" cy="10.800" r="3.400" fill="none" stroke="#e0e0e0" stroke-width="1.200"/><circle cx="10.800" cy="10.800" r="1.300" fill="#e0e0e0"/></svg>
<svg style="left:982.8px;top:33px" width="9" height="7" viewBox="0 0 9 7"><path d="M1 1.500l3.300 3.300 3.300-3.300" stroke="#ddd" stroke-width="1.300" fill="none"/></svg>
<span class="t" style="left:1002.0999999999999px;top:29.500px">Scene</span>
<svg style="left:1095.8px;top:28.500px" width="15" height="15" viewBox="0 0 15 15"><path d="M9.300 1.200L13.800 5.700L12.500 6.300L10.300 5.900L7.800 8.400L7.600 11.300L3.700 7.400L6.600 7.200L9.100 4.700L8.700 2.500Z" fill="none" stroke="#888" stroke-width="1" stroke-linejoin="round"/><path d="M5.600 9.400L1 14" stroke="#888" stroke-width="1.100"/></svg>
<svg style="left:1116.8px;top:28.500px" width="15" height="16" viewBox="0 0 15 16"><path d="M4 4.500H1.200V14.500H9.500V12" fill="none" stroke="#e0e0e0" stroke-width="1.100"/><path d="M4.500 1.200H10.500L13.800 4.500V11.800H4.500Z" fill="#545454" stroke="#e0e0e0" stroke-width="1.100" stroke-linejoin="round"/><path d="M10.300 1.500V4.800H13.500Z" fill="#e0e0e0"/></svg>
<svg style="left:1139.5px;top:31.500px" width="10" height="10" viewBox="0 0 10 10"><path d="M1 1L9 9M9 1L1 9" stroke="#666" stroke-width="1.100"/></svg>
<div class="a" style="left:1160.4px;top:26.300px;width:191.29999999999995px;height:19.500px;background:#1d1d1d;border:1px solid #3d3d3d;border-radius:4px"></div>
<div class="a" style="left:1161.4px;top:27.300px;width:30.299999999999955px;height:17.500px;background:#282828;border-radius:3px 0 0 3px"></div>
<div class="a" style="left:1191.7px;top:27.300px;width:1px;height:17.500px;background:#3a3a3a"></div>
<div class="a" style="left:1311px;top:27.300px;width:20.799999999999955px;height:17.500px;background:#545454"></div>
<div class="a" style="left:1332.5px;top:27.300px;width:18.20000000000009px;height:17.500px;background:#2b2b2b;border-radius:0 3px 3px 0"></div>
<svg style="left:1164px;top:28px" width="16" height="16" viewBox="0 0 16 16"><path d="M1 5.500V15H10.500M3 3.500V13H12.500" stroke="#ccc" stroke-width="1" fill="none"/><rect x="5" y="1" width="10" height="10" fill="#e0e0e0"/><path d="M6 10L9.300 5L12.600 10Z" fill="#282828"/><circle cx="12.800" cy="3.600" r="1.100" fill="#282828"/></svg>
<svg style="left:1180.2px;top:33px" width="9" height="7" viewBox="0 0 9 7"><path d="M1 1.500l3.300 3.300 3.300-3.300" stroke="#ddd" stroke-width="1.300" fill="none"/></svg>
<span class="t" style="left:1199.5px;top:29.500px">ViewLayer</span>
<svg style="left:1314px;top:28.500px" width="15" height="16" viewBox="0 0 15 16"><path d="M4 4.500H1.200V14.500H9.500V12" fill="none" stroke="#e0e0e0" stroke-width="1.100"/><path d="M4.500 1.200H10.500L13.800 4.500V11.800H4.500Z" fill="#545454" stroke="#e0e0e0" stroke-width="1.100" stroke-linejoin="round"/><path d="M10.300 1.500V4.800H13.500Z" fill="#e0e0e0"/></svg>
<svg style="left:1337.3px;top:31.500px" width="10" height="10" viewBox="0 0 10 10"><path d="M1 1L9 9M9 1L1 9" stroke="#666" stroke-width="1.100"/></svg>
<span class="t tab" style="left:948.700px;top:32px;width:6.500px;overflow:hidden">Geometry Nodes</span>
<svg style="left:1238px;top:5px" width="110" height="12" viewBox="0 0 110 12"><g stroke="#fff" stroke-width="1" fill="none"><path d="M0.500 5.500H10.500"/><path d="M46.500 2.500H54.500V10.500H46.500ZM48.500 2.500V0.500H56.500V8.500H54.500"/><path d="M92 0.500L102 10.500M102 0.500L92 10.500" stroke-width="1.200"/></g></svg>
<svg style="left:2.6px;top:4px" width="14.6" height="14.6" viewBox="0 0 24 24"><ellipse cx="15.700" cy="13.400" rx="5.200" ry="4.800" fill="#fff"/><path fill="#ea7600" fill-rule="evenodd" d="M7.350 14.831c.006.314.106.922.256 1.398a7.372 7.372 0 0 0 1.593 2.757 8.227 8.227 0 0 0 2.787 2.001 8.947 8.947 0 0 0 3.660.760 8.964 8.964 0 0 0 3.657-.772 8.285 8.285 0 0 0 2.785-2.010 7.428 7.428 0 0 0 1.592-2.762 6.964 6.964 0 0 0 .25-3.074 7.123 7.123 0 0 0-1.016-2.779 7.764 7.764 0 0 0-1.852-2.043h.002L13.566 2.550l-.02-.015c-.492-.378-1.319-.376-1.860.002-.547.382-.609 1.015-.123 1.415l-.001.001 3.126 2.543-9.530.01h-.013c-.788.001-1.545.518-1.695 1.172-.154.665.381 1.217 1.200 1.220V8.900l4.830-.01-8.620 6.616-.034.025c-.813.622-1.075 1.658-.563 2.313.52.667 1.625.668 2.447.004L7.414 14s-.069.520-.063.831zm12.090 1.741c-.97.988-2.326 1.548-3.795 1.550-1.470.004-2.827-.552-3.797-1.538a4.510 4.510 0 0 1-1.036-1.622 4.282 4.282 0 0 1 .282-3.519 4.702 4.702 0 0 1 1.153-1.371c.942-.768 2.141-1.183 3.396-1.185 1.256-.002 2.455.410 3.398 1.175.48.391.87.854 1.152 1.367a4.280 4.280 0 0 1 .522 1.706 4.236 4.236 0 0 1-.239 1.811 4.540 4.540 0 0 1-1.035 1.626"/><path fill="#265787" d="M12.51 13.214c.046-.8.438-1.506 1.030-2.006a3.424 3.424 0 0 1 2.212-.790c.85 0 1.631.3 2.211.79.592.5.983 1.206 1.028 2.005.045.823-.285 1.586-.865 2.153a3.389 3.389 0 0 1-2.374.938 3.393 3.393 0 0 1-2.376-.938c-.58-.567-.91-1.330-.865-2.152"/></svg>
<svg style="left:9.5px;top:27.7px" width="15.8" height="15.8" viewBox="0 0 24 24"><path fill="#d6d6d6" fill-rule="evenodd" d="M7.350 14.831c.006.314.106.922.256 1.398a7.372 7.372 0 0 0 1.593 2.757 8.227 8.227 0 0 0 2.787 2.001 8.947 8.947 0 0 0 3.660.760 8.964 8.964 0 0 0 3.657-.772 8.285 8.285 0 0 0 2.785-2.010 7.428 7.428 0 0 0 1.592-2.762 6.964 6.964 0 0 0 .25-3.074 7.123 7.123 0 0 0-1.016-2.779 7.764 7.764 0 0 0-1.852-2.043h.002L13.566 2.550l-.02-.015c-.492-.378-1.319-.376-1.860.002-.547.382-.609 1.015-.123 1.415l-.001.001 3.126 2.543-9.530.01h-.013c-.788.001-1.545.518-1.695 1.172-.154.665.381 1.217 1.200 1.220V8.900l4.830-.01-8.620 6.616-.034.025c-.813.622-1.075 1.658-.563 2.313.52.667 1.625.668 2.447.004L7.414 14s-.069.520-.063.831zm12.090 1.741c-.97.988-2.326 1.548-3.795 1.550-1.470.004-2.827-.552-3.797-1.538a4.510 4.510 0 0 1-1.036-1.622 4.282 4.282 0 0 1 .282-3.519 4.702 4.702 0 0 1 1.153-1.371c.942-.768 2.141-1.183 3.396-1.185 1.256-.002 2.455.410 3.398 1.175.48.391.87.854 1.152 1.367a4.280 4.280 0 0 1 .522 1.706 4.236 4.236 0 0 1-.239 1.811 4.540 4.540 0 0 1-1.035 1.626"/><path fill="#d6d6d6" d="M12.51 13.214c.046-.8.438-1.506 1.030-2.006a3.424 3.424 0 0 1 2.212-.790c.85 0 1.631.3 2.211.79.592.5.983 1.206 1.028 2.005.045.823-.285 1.586-.865 2.153a3.389 3.389 0 0 1-2.374.938 3.393 3.393 0 0 1-2.376-.938c-.58-.567-.91-1.330-.865-2.152"/></svg>
<!--END-->
</body></html>
